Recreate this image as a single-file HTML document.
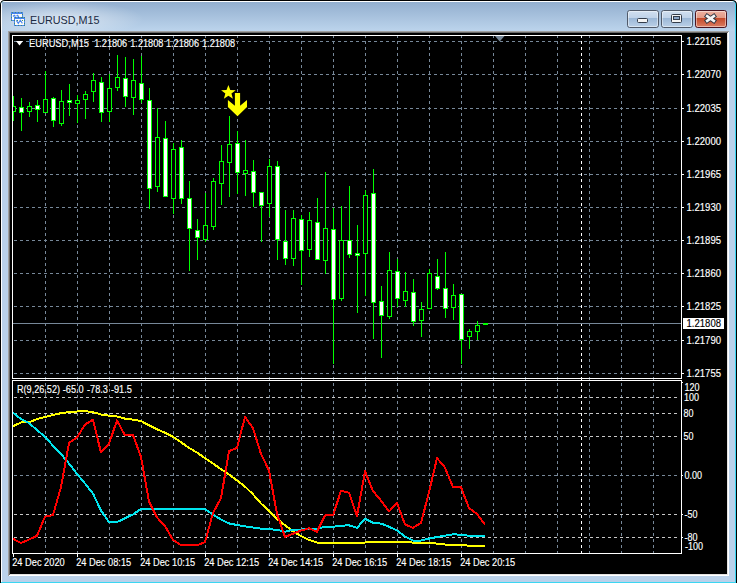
<!DOCTYPE html><html><head><meta charset="utf-8"><style>html,body{margin:0;padding:0;background:#fff;overflow:hidden;width:739px;height:583px}svg{display:block}</style></head><body>
<svg width="739" height="583" viewBox="0 0 739 583">
<defs><linearGradient id="tb" x1="0" y1="0" x2="0" y2="1"><stop offset="0" stop-color="#93afcf"/><stop offset="1" stop-color="#bcd4ec"/></linearGradient><linearGradient id="btn" x1="0" y1="0" x2="0" y2="1"><stop offset="0" stop-color="#d2e0f0"/><stop offset="0.42" stop-color="#c0d3e9"/><stop offset="0.47" stop-color="#9cb8d7"/><stop offset="1" stop-color="#bcd1e8"/></linearGradient><linearGradient id="cbtn" x1="0" y1="0" x2="0" y2="1"><stop offset="0" stop-color="#eeb2a2"/><stop offset="0.42" stop-color="#e39a86"/><stop offset="0.47" stop-color="#c44a2a"/><stop offset="1" stop-color="#dc8066"/></linearGradient><radialGradient id="glow" cx="0.5" cy="0.5" r="0.5"><stop offset="0" stop-color="#fff" stop-opacity="0.55"/><stop offset="1" stop-color="#fff" stop-opacity="0"/></radialGradient><clipPath id="mainclip"><rect x="13" y="36" width="668" height="342"/></clipPath><clipPath id="indclip"><rect x="13" y="381" width="668" height="172"/></clipPath></defs>
<path d="M0 583 V5 Q0 0 5 0 H732 Q737 0 737 5 V583 Z" fill="#000"/>
<path d="M1 583 V5 Q1 1 5 1 H732 Q736 1 736 5 V583 Z" fill="#3ad6f2"/>
<path d="M1 582 V5 Q1 1 5 1 H731 Q735 1 735 5 V582 Z" fill="#fff"/>
<rect x="2" y="2" width="733" height="580" fill="#bad1ea"/>
<rect x="2" y="2" width="733" height="29" fill="url(#tb)"/>
<ellipse cx="62" cy="19" rx="82" ry="18" fill="url(#glow)"/>
<rect x="8" y="31" width="721" height="545" fill="#fff"/>
<path d="M8 31 H729 V32 H9 V576 H8 Z" fill="#a0a0a0"/>
<rect x="9" y="32" width="719" height="543" fill="#e3e3e3"/>
<path d="M9 32 H728 V33 H10 V575 H9 Z" fill="#696969"/>
<rect x="10" y="33" width="717" height="541" fill="#000"/>
<g shape-rendering="crispEdges"><rect x="11" y="12" width="12" height="9" fill="#4a86f0"/><rect x="12" y="14" width="10" height="6" fill="#fdfdf6"/><rect x="14" y="17" width="11" height="9" fill="#4a86f0"/><rect x="15" y="19" width="9" height="6" fill="#fdfdf6"/></g>
<rect x="11.5" y="12.5" width="11" height="8" fill="none" stroke="#3f8a78" stroke-width="1" stroke-dasharray="1 2" shape-rendering="crispEdges"/>
<rect x="14.5" y="17.5" width="10" height="8" fill="none" stroke="#3f8a78" stroke-width="1" stroke-dasharray="1 2" shape-rendering="crispEdges"/>
<path d="M13 16.5 L14.3 15.3 L15.5 16.5 M16.5 16 L17.6 15.2 L18.8 16.8" stroke="#4a86f0" stroke-width="1.1" fill="none"/>
<path d="M16.2 20.3 L18.3 23.4 L20.3 20.3 L22.4 23.4" stroke="#4a86f0" stroke-width="1.1" fill="none"/>
<text x="30" y="24" font-family="Liberation Sans, sans-serif" font-size="11.5" fill="#1b2a44" textLength="69.5" lengthAdjust="spacingAndGlyphs">EURUSD,M15</text>
<rect x="627.5" y="10.5" width="31" height="17" rx="2.2" fill="url(#btn)" stroke="#505a6a" stroke-width="1"/>
<rect x="628.5" y="11.5" width="29" height="15" rx="1.5" fill="none" stroke="#fff" stroke-opacity="0.45" stroke-width="1"/>
<rect x="661.5" y="10.5" width="31" height="17" rx="2.2" fill="url(#btn)" stroke="#505a6a" stroke-width="1"/>
<rect x="662.5" y="11.5" width="29" height="15" rx="1.5" fill="none" stroke="#fff" stroke-opacity="0.45" stroke-width="1"/>
<rect x="695.5" y="10.5" width="31" height="17" rx="2.2" fill="url(#cbtn)" stroke="#4a1420" stroke-width="1"/>
<rect x="696.5" y="11.5" width="29" height="15" rx="1.5" fill="none" stroke="#fff" stroke-opacity="0.45" stroke-width="1"/>
<rect x="637.5" y="18.5" width="10" height="4" rx="1" fill="#f4f4f4" stroke="#333c4a" stroke-width="1"/>
<rect x="671.5" y="14.5" width="10" height="8" rx="1" fill="#f4f4f4" stroke="#333c4a" stroke-width="1"/>
<rect x="673.5" y="16.5" width="6" height="3" fill="#8aa6c8" stroke="#333c4a" stroke-width="1"/>
<path d="M707.2 16.2 L713.8 20.8 M713.8 16.2 L707.2 20.8" stroke="#2e3440" stroke-width="4.6" stroke-linecap="square"/>
<path d="M707.2 16.2 L713.8 20.8 M713.8 16.2 L707.2 20.8" stroke="#f4f4f4" stroke-width="2.7" stroke-linecap="square"/>
<g shape-rendering="crispEdges">
<path d="M45 36h1v2h-1zM45 41h1v3h-1zM45 47h1v3h-1zM45 53h1v3h-1zM45 59h1v3h-1zM45 65h1v3h-1zM45 71h1v3h-1zM45 77h1v3h-1zM45 83h1v3h-1zM45 89h1v3h-1zM45 95h1v3h-1zM45 101h1v3h-1zM45 107h1v3h-1zM45 113h1v3h-1zM45 119h1v3h-1zM45 125h1v3h-1zM45 131h1v3h-1zM45 137h1v3h-1zM45 143h1v3h-1zM45 149h1v3h-1zM45 155h1v3h-1zM45 161h1v3h-1zM45 167h1v3h-1zM45 173h1v3h-1zM45 179h1v3h-1zM45 185h1v3h-1zM45 191h1v3h-1zM45 197h1v3h-1zM45 203h1v3h-1zM45 209h1v3h-1zM45 215h1v3h-1zM45 221h1v3h-1zM45 227h1v3h-1zM45 233h1v3h-1zM45 239h1v3h-1zM45 245h1v3h-1zM45 251h1v3h-1zM45 257h1v3h-1zM45 263h1v3h-1zM45 269h1v3h-1zM45 275h1v3h-1zM45 281h1v3h-1zM45 287h1v3h-1zM45 293h1v3h-1zM45 299h1v3h-1zM45 305h1v3h-1zM45 311h1v3h-1zM45 317h1v3h-1zM45 323h1v3h-1zM45 329h1v3h-1zM45 335h1v3h-1zM45 341h1v3h-1zM45 347h1v3h-1zM45 353h1v3h-1zM45 359h1v3h-1zM45 365h1v3h-1zM45 371h1v3h-1zM45 377h1v1h-1zM45 379h1v1h-1zM45 383h1v3h-1zM45 389h1v3h-1zM45 395h1v3h-1zM45 401h1v3h-1zM45 407h1v3h-1zM45 413h1v3h-1zM45 419h1v3h-1zM45 425h1v3h-1zM45 431h1v3h-1zM45 437h1v3h-1zM45 443h1v3h-1zM45 449h1v3h-1zM45 455h1v3h-1zM45 461h1v3h-1zM45 467h1v3h-1zM45 473h1v3h-1zM45 479h1v3h-1zM45 485h1v3h-1zM45 491h1v3h-1zM45 497h1v3h-1zM45 503h1v3h-1zM45 509h1v3h-1zM45 515h1v3h-1zM45 521h1v3h-1zM45 527h1v3h-1zM45 533h1v3h-1zM45 539h1v3h-1zM45 545h1v3h-1zM45 551h1v2h-1zM77 36h1v2h-1zM77 41h1v3h-1zM77 47h1v3h-1zM77 53h1v3h-1zM77 59h1v3h-1zM77 65h1v3h-1zM77 71h1v3h-1zM77 77h1v3h-1zM77 83h1v3h-1zM77 89h1v3h-1zM77 95h1v3h-1zM77 101h1v3h-1zM77 107h1v3h-1zM77 113h1v3h-1zM77 119h1v3h-1zM77 125h1v3h-1zM77 131h1v3h-1zM77 137h1v3h-1zM77 143h1v3h-1zM77 149h1v3h-1zM77 155h1v3h-1zM77 161h1v3h-1zM77 167h1v3h-1zM77 173h1v3h-1zM77 179h1v3h-1zM77 185h1v3h-1zM77 191h1v3h-1zM77 197h1v3h-1zM77 203h1v3h-1zM77 209h1v3h-1zM77 215h1v3h-1zM77 221h1v3h-1zM77 227h1v3h-1zM77 233h1v3h-1zM77 239h1v3h-1zM77 245h1v3h-1zM77 251h1v3h-1zM77 257h1v3h-1zM77 263h1v3h-1zM77 269h1v3h-1zM77 275h1v3h-1zM77 281h1v3h-1zM77 287h1v3h-1zM77 293h1v3h-1zM77 299h1v3h-1zM77 305h1v3h-1zM77 311h1v3h-1zM77 317h1v3h-1zM77 323h1v3h-1zM77 329h1v3h-1zM77 335h1v3h-1zM77 341h1v3h-1zM77 347h1v3h-1zM77 353h1v3h-1zM77 359h1v3h-1zM77 365h1v3h-1zM77 371h1v3h-1zM77 377h1v1h-1zM77 379h1v1h-1zM77 383h1v3h-1zM77 389h1v3h-1zM77 395h1v3h-1zM77 401h1v3h-1zM77 407h1v3h-1zM77 413h1v3h-1zM77 419h1v3h-1zM77 425h1v3h-1zM77 431h1v3h-1zM77 437h1v3h-1zM77 443h1v3h-1zM77 449h1v3h-1zM77 455h1v3h-1zM77 461h1v3h-1zM77 467h1v3h-1zM77 473h1v3h-1zM77 479h1v3h-1zM77 485h1v3h-1zM77 491h1v3h-1zM77 497h1v3h-1zM77 503h1v3h-1zM77 509h1v3h-1zM77 515h1v3h-1zM77 521h1v3h-1zM77 527h1v3h-1zM77 533h1v3h-1zM77 539h1v3h-1zM77 545h1v3h-1zM77 551h1v2h-1zM109 36h1v2h-1zM109 41h1v3h-1zM109 47h1v3h-1zM109 53h1v3h-1zM109 59h1v3h-1zM109 65h1v3h-1zM109 71h1v3h-1zM109 77h1v3h-1zM109 83h1v3h-1zM109 89h1v3h-1zM109 95h1v3h-1zM109 101h1v3h-1zM109 107h1v3h-1zM109 113h1v3h-1zM109 119h1v3h-1zM109 125h1v3h-1zM109 131h1v3h-1zM109 137h1v3h-1zM109 143h1v3h-1zM109 149h1v3h-1zM109 155h1v3h-1zM109 161h1v3h-1zM109 167h1v3h-1zM109 173h1v3h-1zM109 179h1v3h-1zM109 185h1v3h-1zM109 191h1v3h-1zM109 197h1v3h-1zM109 203h1v3h-1zM109 209h1v3h-1zM109 215h1v3h-1zM109 221h1v3h-1zM109 227h1v3h-1zM109 233h1v3h-1zM109 239h1v3h-1zM109 245h1v3h-1zM109 251h1v3h-1zM109 257h1v3h-1zM109 263h1v3h-1zM109 269h1v3h-1zM109 275h1v3h-1zM109 281h1v3h-1zM109 287h1v3h-1zM109 293h1v3h-1zM109 299h1v3h-1zM109 305h1v3h-1zM109 311h1v3h-1zM109 317h1v3h-1zM109 323h1v3h-1zM109 329h1v3h-1zM109 335h1v3h-1zM109 341h1v3h-1zM109 347h1v3h-1zM109 353h1v3h-1zM109 359h1v3h-1zM109 365h1v3h-1zM109 371h1v3h-1zM109 377h1v1h-1zM109 379h1v1h-1zM109 383h1v3h-1zM109 389h1v3h-1zM109 395h1v3h-1zM109 401h1v3h-1zM109 407h1v3h-1zM109 413h1v3h-1zM109 419h1v3h-1zM109 425h1v3h-1zM109 431h1v3h-1zM109 437h1v3h-1zM109 443h1v3h-1zM109 449h1v3h-1zM109 455h1v3h-1zM109 461h1v3h-1zM109 467h1v3h-1zM109 473h1v3h-1zM109 479h1v3h-1zM109 485h1v3h-1zM109 491h1v3h-1zM109 497h1v3h-1zM109 503h1v3h-1zM109 509h1v3h-1zM109 515h1v3h-1zM109 521h1v3h-1zM109 527h1v3h-1zM109 533h1v3h-1zM109 539h1v3h-1zM109 545h1v3h-1zM109 551h1v2h-1zM141 36h1v2h-1zM141 41h1v3h-1zM141 47h1v3h-1zM141 53h1v3h-1zM141 59h1v3h-1zM141 65h1v3h-1zM141 71h1v3h-1zM141 77h1v3h-1zM141 83h1v3h-1zM141 89h1v3h-1zM141 95h1v3h-1zM141 101h1v3h-1zM141 107h1v3h-1zM141 113h1v3h-1zM141 119h1v3h-1zM141 125h1v3h-1zM141 131h1v3h-1zM141 137h1v3h-1zM141 143h1v3h-1zM141 149h1v3h-1zM141 155h1v3h-1zM141 161h1v3h-1zM141 167h1v3h-1zM141 173h1v3h-1zM141 179h1v3h-1zM141 185h1v3h-1zM141 191h1v3h-1zM141 197h1v3h-1zM141 203h1v3h-1zM141 209h1v3h-1zM141 215h1v3h-1zM141 221h1v3h-1zM141 227h1v3h-1zM141 233h1v3h-1zM141 239h1v3h-1zM141 245h1v3h-1zM141 251h1v3h-1zM141 257h1v3h-1zM141 263h1v3h-1zM141 269h1v3h-1zM141 275h1v3h-1zM141 281h1v3h-1zM141 287h1v3h-1zM141 293h1v3h-1zM141 299h1v3h-1zM141 305h1v3h-1zM141 311h1v3h-1zM141 317h1v3h-1zM141 323h1v3h-1zM141 329h1v3h-1zM141 335h1v3h-1zM141 341h1v3h-1zM141 347h1v3h-1zM141 353h1v3h-1zM141 359h1v3h-1zM141 365h1v3h-1zM141 371h1v3h-1zM141 377h1v1h-1zM141 379h1v1h-1zM141 383h1v3h-1zM141 389h1v3h-1zM141 395h1v3h-1zM141 401h1v3h-1zM141 407h1v3h-1zM141 413h1v3h-1zM141 419h1v3h-1zM141 425h1v3h-1zM141 431h1v3h-1zM141 437h1v3h-1zM141 443h1v3h-1zM141 449h1v3h-1zM141 455h1v3h-1zM141 461h1v3h-1zM141 467h1v3h-1zM141 473h1v3h-1zM141 479h1v3h-1zM141 485h1v3h-1zM141 491h1v3h-1zM141 497h1v3h-1zM141 503h1v3h-1zM141 509h1v3h-1zM141 515h1v3h-1zM141 521h1v3h-1zM141 527h1v3h-1zM141 533h1v3h-1zM141 539h1v3h-1zM141 545h1v3h-1zM141 551h1v2h-1zM173 36h1v2h-1zM173 41h1v3h-1zM173 47h1v3h-1zM173 53h1v3h-1zM173 59h1v3h-1zM173 65h1v3h-1zM173 71h1v3h-1zM173 77h1v3h-1zM173 83h1v3h-1zM173 89h1v3h-1zM173 95h1v3h-1zM173 101h1v3h-1zM173 107h1v3h-1zM173 113h1v3h-1zM173 119h1v3h-1zM173 125h1v3h-1zM173 131h1v3h-1zM173 137h1v3h-1zM173 143h1v3h-1zM173 149h1v3h-1zM173 155h1v3h-1zM173 161h1v3h-1zM173 167h1v3h-1zM173 173h1v3h-1zM173 179h1v3h-1zM173 185h1v3h-1zM173 191h1v3h-1zM173 197h1v3h-1zM173 203h1v3h-1zM173 209h1v3h-1zM173 215h1v3h-1zM173 221h1v3h-1zM173 227h1v3h-1zM173 233h1v3h-1zM173 239h1v3h-1zM173 245h1v3h-1zM173 251h1v3h-1zM173 257h1v3h-1zM173 263h1v3h-1zM173 269h1v3h-1zM173 275h1v3h-1zM173 281h1v3h-1zM173 287h1v3h-1zM173 293h1v3h-1zM173 299h1v3h-1zM173 305h1v3h-1zM173 311h1v3h-1zM173 317h1v3h-1zM173 323h1v3h-1zM173 329h1v3h-1zM173 335h1v3h-1zM173 341h1v3h-1zM173 347h1v3h-1zM173 353h1v3h-1zM173 359h1v3h-1zM173 365h1v3h-1zM173 371h1v3h-1zM173 377h1v1h-1zM173 379h1v1h-1zM173 383h1v3h-1zM173 389h1v3h-1zM173 395h1v3h-1zM173 401h1v3h-1zM173 407h1v3h-1zM173 413h1v3h-1zM173 419h1v3h-1zM173 425h1v3h-1zM173 431h1v3h-1zM173 437h1v3h-1zM173 443h1v3h-1zM173 449h1v3h-1zM173 455h1v3h-1zM173 461h1v3h-1zM173 467h1v3h-1zM173 473h1v3h-1zM173 479h1v3h-1zM173 485h1v3h-1zM173 491h1v3h-1zM173 497h1v3h-1zM173 503h1v3h-1zM173 509h1v3h-1zM173 515h1v3h-1zM173 521h1v3h-1zM173 527h1v3h-1zM173 533h1v3h-1zM173 539h1v3h-1zM173 545h1v3h-1zM173 551h1v2h-1zM205 36h1v2h-1zM205 41h1v3h-1zM205 47h1v3h-1zM205 53h1v3h-1zM205 59h1v3h-1zM205 65h1v3h-1zM205 71h1v3h-1zM205 77h1v3h-1zM205 83h1v3h-1zM205 89h1v3h-1zM205 95h1v3h-1zM205 101h1v3h-1zM205 107h1v3h-1zM205 113h1v3h-1zM205 119h1v3h-1zM205 125h1v3h-1zM205 131h1v3h-1zM205 137h1v3h-1zM205 143h1v3h-1zM205 149h1v3h-1zM205 155h1v3h-1zM205 161h1v3h-1zM205 167h1v3h-1zM205 173h1v3h-1zM205 179h1v3h-1zM205 185h1v3h-1zM205 191h1v3h-1zM205 197h1v3h-1zM205 203h1v3h-1zM205 209h1v3h-1zM205 215h1v3h-1zM205 221h1v3h-1zM205 227h1v3h-1zM205 233h1v3h-1zM205 239h1v3h-1zM205 245h1v3h-1zM205 251h1v3h-1zM205 257h1v3h-1zM205 263h1v3h-1zM205 269h1v3h-1zM205 275h1v3h-1zM205 281h1v3h-1zM205 287h1v3h-1zM205 293h1v3h-1zM205 299h1v3h-1zM205 305h1v3h-1zM205 311h1v3h-1zM205 317h1v3h-1zM205 323h1v3h-1zM205 329h1v3h-1zM205 335h1v3h-1zM205 341h1v3h-1zM205 347h1v3h-1zM205 353h1v3h-1zM205 359h1v3h-1zM205 365h1v3h-1zM205 371h1v3h-1zM205 377h1v1h-1zM205 379h1v1h-1zM205 383h1v3h-1zM205 389h1v3h-1zM205 395h1v3h-1zM205 401h1v3h-1zM205 407h1v3h-1zM205 413h1v3h-1zM205 419h1v3h-1zM205 425h1v3h-1zM205 431h1v3h-1zM205 437h1v3h-1zM205 443h1v3h-1zM205 449h1v3h-1zM205 455h1v3h-1zM205 461h1v3h-1zM205 467h1v3h-1zM205 473h1v3h-1zM205 479h1v3h-1zM205 485h1v3h-1zM205 491h1v3h-1zM205 497h1v3h-1zM205 503h1v3h-1zM205 509h1v3h-1zM205 515h1v3h-1zM205 521h1v3h-1zM205 527h1v3h-1zM205 533h1v3h-1zM205 539h1v3h-1zM205 545h1v3h-1zM205 551h1v2h-1zM237 36h1v2h-1zM237 41h1v3h-1zM237 47h1v3h-1zM237 53h1v3h-1zM237 59h1v3h-1zM237 65h1v3h-1zM237 71h1v3h-1zM237 77h1v3h-1zM237 83h1v3h-1zM237 89h1v3h-1zM237 95h1v3h-1zM237 101h1v3h-1zM237 107h1v3h-1zM237 113h1v3h-1zM237 119h1v3h-1zM237 125h1v3h-1zM237 131h1v3h-1zM237 137h1v3h-1zM237 143h1v3h-1zM237 149h1v3h-1zM237 155h1v3h-1zM237 161h1v3h-1zM237 167h1v3h-1zM237 173h1v3h-1zM237 179h1v3h-1zM237 185h1v3h-1zM237 191h1v3h-1zM237 197h1v3h-1zM237 203h1v3h-1zM237 209h1v3h-1zM237 215h1v3h-1zM237 221h1v3h-1zM237 227h1v3h-1zM237 233h1v3h-1zM237 239h1v3h-1zM237 245h1v3h-1zM237 251h1v3h-1zM237 257h1v3h-1zM237 263h1v3h-1zM237 269h1v3h-1zM237 275h1v3h-1zM237 281h1v3h-1zM237 287h1v3h-1zM237 293h1v3h-1zM237 299h1v3h-1zM237 305h1v3h-1zM237 311h1v3h-1zM237 317h1v3h-1zM237 323h1v3h-1zM237 329h1v3h-1zM237 335h1v3h-1zM237 341h1v3h-1zM237 347h1v3h-1zM237 353h1v3h-1zM237 359h1v3h-1zM237 365h1v3h-1zM237 371h1v3h-1zM237 377h1v1h-1zM237 379h1v1h-1zM237 383h1v3h-1zM237 389h1v3h-1zM237 395h1v3h-1zM237 401h1v3h-1zM237 407h1v3h-1zM237 413h1v3h-1zM237 419h1v3h-1zM237 425h1v3h-1zM237 431h1v3h-1zM237 437h1v3h-1zM237 443h1v3h-1zM237 449h1v3h-1zM237 455h1v3h-1zM237 461h1v3h-1zM237 467h1v3h-1zM237 473h1v3h-1zM237 479h1v3h-1zM237 485h1v3h-1zM237 491h1v3h-1zM237 497h1v3h-1zM237 503h1v3h-1zM237 509h1v3h-1zM237 515h1v3h-1zM237 521h1v3h-1zM237 527h1v3h-1zM237 533h1v3h-1zM237 539h1v3h-1zM237 545h1v3h-1zM237 551h1v2h-1zM269 36h1v2h-1zM269 41h1v3h-1zM269 47h1v3h-1zM269 53h1v3h-1zM269 59h1v3h-1zM269 65h1v3h-1zM269 71h1v3h-1zM269 77h1v3h-1zM269 83h1v3h-1zM269 89h1v3h-1zM269 95h1v3h-1zM269 101h1v3h-1zM269 107h1v3h-1zM269 113h1v3h-1zM269 119h1v3h-1zM269 125h1v3h-1zM269 131h1v3h-1zM269 137h1v3h-1zM269 143h1v3h-1zM269 149h1v3h-1zM269 155h1v3h-1zM269 161h1v3h-1zM269 167h1v3h-1zM269 173h1v3h-1zM269 179h1v3h-1zM269 185h1v3h-1zM269 191h1v3h-1zM269 197h1v3h-1zM269 203h1v3h-1zM269 209h1v3h-1zM269 215h1v3h-1zM269 221h1v3h-1zM269 227h1v3h-1zM269 233h1v3h-1zM269 239h1v3h-1zM269 245h1v3h-1zM269 251h1v3h-1zM269 257h1v3h-1zM269 263h1v3h-1zM269 269h1v3h-1zM269 275h1v3h-1zM269 281h1v3h-1zM269 287h1v3h-1zM269 293h1v3h-1zM269 299h1v3h-1zM269 305h1v3h-1zM269 311h1v3h-1zM269 317h1v3h-1zM269 323h1v3h-1zM269 329h1v3h-1zM269 335h1v3h-1zM269 341h1v3h-1zM269 347h1v3h-1zM269 353h1v3h-1zM269 359h1v3h-1zM269 365h1v3h-1zM269 371h1v3h-1zM269 377h1v1h-1zM269 379h1v1h-1zM269 383h1v3h-1zM269 389h1v3h-1zM269 395h1v3h-1zM269 401h1v3h-1zM269 407h1v3h-1zM269 413h1v3h-1zM269 419h1v3h-1zM269 425h1v3h-1zM269 431h1v3h-1zM269 437h1v3h-1zM269 443h1v3h-1zM269 449h1v3h-1zM269 455h1v3h-1zM269 461h1v3h-1zM269 467h1v3h-1zM269 473h1v3h-1zM269 479h1v3h-1zM269 485h1v3h-1zM269 491h1v3h-1zM269 497h1v3h-1zM269 503h1v3h-1zM269 509h1v3h-1zM269 515h1v3h-1zM269 521h1v3h-1zM269 527h1v3h-1zM269 533h1v3h-1zM269 539h1v3h-1zM269 545h1v3h-1zM269 551h1v2h-1zM301 36h1v2h-1zM301 41h1v3h-1zM301 47h1v3h-1zM301 53h1v3h-1zM301 59h1v3h-1zM301 65h1v3h-1zM301 71h1v3h-1zM301 77h1v3h-1zM301 83h1v3h-1zM301 89h1v3h-1zM301 95h1v3h-1zM301 101h1v3h-1zM301 107h1v3h-1zM301 113h1v3h-1zM301 119h1v3h-1zM301 125h1v3h-1zM301 131h1v3h-1zM301 137h1v3h-1zM301 143h1v3h-1zM301 149h1v3h-1zM301 155h1v3h-1zM301 161h1v3h-1zM301 167h1v3h-1zM301 173h1v3h-1zM301 179h1v3h-1zM301 185h1v3h-1zM301 191h1v3h-1zM301 197h1v3h-1zM301 203h1v3h-1zM301 209h1v3h-1zM301 215h1v3h-1zM301 221h1v3h-1zM301 227h1v3h-1zM301 233h1v3h-1zM301 239h1v3h-1zM301 245h1v3h-1zM301 251h1v3h-1zM301 257h1v3h-1zM301 263h1v3h-1zM301 269h1v3h-1zM301 275h1v3h-1zM301 281h1v3h-1zM301 287h1v3h-1zM301 293h1v3h-1zM301 299h1v3h-1zM301 305h1v3h-1zM301 311h1v3h-1zM301 317h1v3h-1zM301 323h1v3h-1zM301 329h1v3h-1zM301 335h1v3h-1zM301 341h1v3h-1zM301 347h1v3h-1zM301 353h1v3h-1zM301 359h1v3h-1zM301 365h1v3h-1zM301 371h1v3h-1zM301 377h1v1h-1zM301 379h1v1h-1zM301 383h1v3h-1zM301 389h1v3h-1zM301 395h1v3h-1zM301 401h1v3h-1zM301 407h1v3h-1zM301 413h1v3h-1zM301 419h1v3h-1zM301 425h1v3h-1zM301 431h1v3h-1zM301 437h1v3h-1zM301 443h1v3h-1zM301 449h1v3h-1zM301 455h1v3h-1zM301 461h1v3h-1zM301 467h1v3h-1zM301 473h1v3h-1zM301 479h1v3h-1zM301 485h1v3h-1zM301 491h1v3h-1zM301 497h1v3h-1zM301 503h1v3h-1zM301 509h1v3h-1zM301 515h1v3h-1zM301 521h1v3h-1zM301 527h1v3h-1zM301 533h1v3h-1zM301 539h1v3h-1zM301 545h1v3h-1zM301 551h1v2h-1zM333 36h1v2h-1zM333 41h1v3h-1zM333 47h1v3h-1zM333 53h1v3h-1zM333 59h1v3h-1zM333 65h1v3h-1zM333 71h1v3h-1zM333 77h1v3h-1zM333 83h1v3h-1zM333 89h1v3h-1zM333 95h1v3h-1zM333 101h1v3h-1zM333 107h1v3h-1zM333 113h1v3h-1zM333 119h1v3h-1zM333 125h1v3h-1zM333 131h1v3h-1zM333 137h1v3h-1zM333 143h1v3h-1zM333 149h1v3h-1zM333 155h1v3h-1zM333 161h1v3h-1zM333 167h1v3h-1zM333 173h1v3h-1zM333 179h1v3h-1zM333 185h1v3h-1zM333 191h1v3h-1zM333 197h1v3h-1zM333 203h1v3h-1zM333 209h1v3h-1zM333 215h1v3h-1zM333 221h1v3h-1zM333 227h1v3h-1zM333 233h1v3h-1zM333 239h1v3h-1zM333 245h1v3h-1zM333 251h1v3h-1zM333 257h1v3h-1zM333 263h1v3h-1zM333 269h1v3h-1zM333 275h1v3h-1zM333 281h1v3h-1zM333 287h1v3h-1zM333 293h1v3h-1zM333 299h1v3h-1zM333 305h1v3h-1zM333 311h1v3h-1zM333 317h1v3h-1zM333 323h1v3h-1zM333 329h1v3h-1zM333 335h1v3h-1zM333 341h1v3h-1zM333 347h1v3h-1zM333 353h1v3h-1zM333 359h1v3h-1zM333 365h1v3h-1zM333 371h1v3h-1zM333 377h1v1h-1zM333 379h1v1h-1zM333 383h1v3h-1zM333 389h1v3h-1zM333 395h1v3h-1zM333 401h1v3h-1zM333 407h1v3h-1zM333 413h1v3h-1zM333 419h1v3h-1zM333 425h1v3h-1zM333 431h1v3h-1zM333 437h1v3h-1zM333 443h1v3h-1zM333 449h1v3h-1zM333 455h1v3h-1zM333 461h1v3h-1zM333 467h1v3h-1zM333 473h1v3h-1zM333 479h1v3h-1zM333 485h1v3h-1zM333 491h1v3h-1zM333 497h1v3h-1zM333 503h1v3h-1zM333 509h1v3h-1zM333 515h1v3h-1zM333 521h1v3h-1zM333 527h1v3h-1zM333 533h1v3h-1zM333 539h1v3h-1zM333 545h1v3h-1zM333 551h1v2h-1zM365 36h1v2h-1zM365 41h1v3h-1zM365 47h1v3h-1zM365 53h1v3h-1zM365 59h1v3h-1zM365 65h1v3h-1zM365 71h1v3h-1zM365 77h1v3h-1zM365 83h1v3h-1zM365 89h1v3h-1zM365 95h1v3h-1zM365 101h1v3h-1zM365 107h1v3h-1zM365 113h1v3h-1zM365 119h1v3h-1zM365 125h1v3h-1zM365 131h1v3h-1zM365 137h1v3h-1zM365 143h1v3h-1zM365 149h1v3h-1zM365 155h1v3h-1zM365 161h1v3h-1zM365 167h1v3h-1zM365 173h1v3h-1zM365 179h1v3h-1zM365 185h1v3h-1zM365 191h1v3h-1zM365 197h1v3h-1zM365 203h1v3h-1zM365 209h1v3h-1zM365 215h1v3h-1zM365 221h1v3h-1zM365 227h1v3h-1zM365 233h1v3h-1zM365 239h1v3h-1zM365 245h1v3h-1zM365 251h1v3h-1zM365 257h1v3h-1zM365 263h1v3h-1zM365 269h1v3h-1zM365 275h1v3h-1zM365 281h1v3h-1zM365 287h1v3h-1zM365 293h1v3h-1zM365 299h1v3h-1zM365 305h1v3h-1zM365 311h1v3h-1zM365 317h1v3h-1zM365 323h1v3h-1zM365 329h1v3h-1zM365 335h1v3h-1zM365 341h1v3h-1zM365 347h1v3h-1zM365 353h1v3h-1zM365 359h1v3h-1zM365 365h1v3h-1zM365 371h1v3h-1zM365 377h1v1h-1zM365 379h1v1h-1zM365 383h1v3h-1zM365 389h1v3h-1zM365 395h1v3h-1zM365 401h1v3h-1zM365 407h1v3h-1zM365 413h1v3h-1zM365 419h1v3h-1zM365 425h1v3h-1zM365 431h1v3h-1zM365 437h1v3h-1zM365 443h1v3h-1zM365 449h1v3h-1zM365 455h1v3h-1zM365 461h1v3h-1zM365 467h1v3h-1zM365 473h1v3h-1zM365 479h1v3h-1zM365 485h1v3h-1zM365 491h1v3h-1zM365 497h1v3h-1zM365 503h1v3h-1zM365 509h1v3h-1zM365 515h1v3h-1zM365 521h1v3h-1zM365 527h1v3h-1zM365 533h1v3h-1zM365 539h1v3h-1zM365 545h1v3h-1zM365 551h1v2h-1zM397 36h1v2h-1zM397 41h1v3h-1zM397 47h1v3h-1zM397 53h1v3h-1zM397 59h1v3h-1zM397 65h1v3h-1zM397 71h1v3h-1zM397 77h1v3h-1zM397 83h1v3h-1zM397 89h1v3h-1zM397 95h1v3h-1zM397 101h1v3h-1zM397 107h1v3h-1zM397 113h1v3h-1zM397 119h1v3h-1zM397 125h1v3h-1zM397 131h1v3h-1zM397 137h1v3h-1zM397 143h1v3h-1zM397 149h1v3h-1zM397 155h1v3h-1zM397 161h1v3h-1zM397 167h1v3h-1zM397 173h1v3h-1zM397 179h1v3h-1zM397 185h1v3h-1zM397 191h1v3h-1zM397 197h1v3h-1zM397 203h1v3h-1zM397 209h1v3h-1zM397 215h1v3h-1zM397 221h1v3h-1zM397 227h1v3h-1zM397 233h1v3h-1zM397 239h1v3h-1zM397 245h1v3h-1zM397 251h1v3h-1zM397 257h1v3h-1zM397 263h1v3h-1zM397 269h1v3h-1zM397 275h1v3h-1zM397 281h1v3h-1zM397 287h1v3h-1zM397 293h1v3h-1zM397 299h1v3h-1zM397 305h1v3h-1zM397 311h1v3h-1zM397 317h1v3h-1zM397 323h1v3h-1zM397 329h1v3h-1zM397 335h1v3h-1zM397 341h1v3h-1zM397 347h1v3h-1zM397 353h1v3h-1zM397 359h1v3h-1zM397 365h1v3h-1zM397 371h1v3h-1zM397 377h1v1h-1zM397 379h1v1h-1zM397 383h1v3h-1zM397 389h1v3h-1zM397 395h1v3h-1zM397 401h1v3h-1zM397 407h1v3h-1zM397 413h1v3h-1zM397 419h1v3h-1zM397 425h1v3h-1zM397 431h1v3h-1zM397 437h1v3h-1zM397 443h1v3h-1zM397 449h1v3h-1zM397 455h1v3h-1zM397 461h1v3h-1zM397 467h1v3h-1zM397 473h1v3h-1zM397 479h1v3h-1zM397 485h1v3h-1zM397 491h1v3h-1zM397 497h1v3h-1zM397 503h1v3h-1zM397 509h1v3h-1zM397 515h1v3h-1zM397 521h1v3h-1zM397 527h1v3h-1zM397 533h1v3h-1zM397 539h1v3h-1zM397 545h1v3h-1zM397 551h1v2h-1zM429 36h1v2h-1zM429 41h1v3h-1zM429 47h1v3h-1zM429 53h1v3h-1zM429 59h1v3h-1zM429 65h1v3h-1zM429 71h1v3h-1zM429 77h1v3h-1zM429 83h1v3h-1zM429 89h1v3h-1zM429 95h1v3h-1zM429 101h1v3h-1zM429 107h1v3h-1zM429 113h1v3h-1zM429 119h1v3h-1zM429 125h1v3h-1zM429 131h1v3h-1zM429 137h1v3h-1zM429 143h1v3h-1zM429 149h1v3h-1zM429 155h1v3h-1zM429 161h1v3h-1zM429 167h1v3h-1zM429 173h1v3h-1zM429 179h1v3h-1zM429 185h1v3h-1zM429 191h1v3h-1zM429 197h1v3h-1zM429 203h1v3h-1zM429 209h1v3h-1zM429 215h1v3h-1zM429 221h1v3h-1zM429 227h1v3h-1zM429 233h1v3h-1zM429 239h1v3h-1zM429 245h1v3h-1zM429 251h1v3h-1zM429 257h1v3h-1zM429 263h1v3h-1zM429 269h1v3h-1zM429 275h1v3h-1zM429 281h1v3h-1zM429 287h1v3h-1zM429 293h1v3h-1zM429 299h1v3h-1zM429 305h1v3h-1zM429 311h1v3h-1zM429 317h1v3h-1zM429 323h1v3h-1zM429 329h1v3h-1zM429 335h1v3h-1zM429 341h1v3h-1zM429 347h1v3h-1zM429 353h1v3h-1zM429 359h1v3h-1zM429 365h1v3h-1zM429 371h1v3h-1zM429 377h1v1h-1zM429 379h1v1h-1zM429 383h1v3h-1zM429 389h1v3h-1zM429 395h1v3h-1zM429 401h1v3h-1zM429 407h1v3h-1zM429 413h1v3h-1zM429 419h1v3h-1zM429 425h1v3h-1zM429 431h1v3h-1zM429 437h1v3h-1zM429 443h1v3h-1zM429 449h1v3h-1zM429 455h1v3h-1zM429 461h1v3h-1zM429 467h1v3h-1zM429 473h1v3h-1zM429 479h1v3h-1zM429 485h1v3h-1zM429 491h1v3h-1zM429 497h1v3h-1zM429 503h1v3h-1zM429 509h1v3h-1zM429 515h1v3h-1zM429 521h1v3h-1zM429 527h1v3h-1zM429 533h1v3h-1zM429 539h1v3h-1zM429 545h1v3h-1zM429 551h1v2h-1zM461 36h1v2h-1zM461 41h1v3h-1zM461 47h1v3h-1zM461 53h1v3h-1zM461 59h1v3h-1zM461 65h1v3h-1zM461 71h1v3h-1zM461 77h1v3h-1zM461 83h1v3h-1zM461 89h1v3h-1zM461 95h1v3h-1zM461 101h1v3h-1zM461 107h1v3h-1zM461 113h1v3h-1zM461 119h1v3h-1zM461 125h1v3h-1zM461 131h1v3h-1zM461 137h1v3h-1zM461 143h1v3h-1zM461 149h1v3h-1zM461 155h1v3h-1zM461 161h1v3h-1zM461 167h1v3h-1zM461 173h1v3h-1zM461 179h1v3h-1zM461 185h1v3h-1zM461 191h1v3h-1zM461 197h1v3h-1zM461 203h1v3h-1zM461 209h1v3h-1zM461 215h1v3h-1zM461 221h1v3h-1zM461 227h1v3h-1zM461 233h1v3h-1zM461 239h1v3h-1zM461 245h1v3h-1zM461 251h1v3h-1zM461 257h1v3h-1zM461 263h1v3h-1zM461 269h1v3h-1zM461 275h1v3h-1zM461 281h1v3h-1zM461 287h1v3h-1zM461 293h1v3h-1zM461 299h1v3h-1zM461 305h1v3h-1zM461 311h1v3h-1zM461 317h1v3h-1zM461 323h1v3h-1zM461 329h1v3h-1zM461 335h1v3h-1zM461 341h1v3h-1zM461 347h1v3h-1zM461 353h1v3h-1zM461 359h1v3h-1zM461 365h1v3h-1zM461 371h1v3h-1zM461 377h1v1h-1zM461 379h1v1h-1zM461 383h1v3h-1zM461 389h1v3h-1zM461 395h1v3h-1zM461 401h1v3h-1zM461 407h1v3h-1zM461 413h1v3h-1zM461 419h1v3h-1zM461 425h1v3h-1zM461 431h1v3h-1zM461 437h1v3h-1zM461 443h1v3h-1zM461 449h1v3h-1zM461 455h1v3h-1zM461 461h1v3h-1zM461 467h1v3h-1zM461 473h1v3h-1zM461 479h1v3h-1zM461 485h1v3h-1zM461 491h1v3h-1zM461 497h1v3h-1zM461 503h1v3h-1zM461 509h1v3h-1zM461 515h1v3h-1zM461 521h1v3h-1zM461 527h1v3h-1zM461 533h1v3h-1zM461 539h1v3h-1zM461 545h1v3h-1zM461 551h1v2h-1zM493 36h1v2h-1zM493 41h1v3h-1zM493 47h1v3h-1zM493 53h1v3h-1zM493 59h1v3h-1zM493 65h1v3h-1zM493 71h1v3h-1zM493 77h1v3h-1zM493 83h1v3h-1zM493 89h1v3h-1zM493 95h1v3h-1zM493 101h1v3h-1zM493 107h1v3h-1zM493 113h1v3h-1zM493 119h1v3h-1zM493 125h1v3h-1zM493 131h1v3h-1zM493 137h1v3h-1zM493 143h1v3h-1zM493 149h1v3h-1zM493 155h1v3h-1zM493 161h1v3h-1zM493 167h1v3h-1zM493 173h1v3h-1zM493 179h1v3h-1zM493 185h1v3h-1zM493 191h1v3h-1zM493 197h1v3h-1zM493 203h1v3h-1zM493 209h1v3h-1zM493 215h1v3h-1zM493 221h1v3h-1zM493 227h1v3h-1zM493 233h1v3h-1zM493 239h1v3h-1zM493 245h1v3h-1zM493 251h1v3h-1zM493 257h1v3h-1zM493 263h1v3h-1zM493 269h1v3h-1zM493 275h1v3h-1zM493 281h1v3h-1zM493 287h1v3h-1zM493 293h1v3h-1zM493 299h1v3h-1zM493 305h1v3h-1zM493 311h1v3h-1zM493 317h1v3h-1zM493 323h1v3h-1zM493 329h1v3h-1zM493 335h1v3h-1zM493 341h1v3h-1zM493 347h1v3h-1zM493 353h1v3h-1zM493 359h1v3h-1zM493 365h1v3h-1zM493 371h1v3h-1zM493 377h1v1h-1zM493 379h1v1h-1zM493 383h1v3h-1zM493 389h1v3h-1zM493 395h1v3h-1zM493 401h1v3h-1zM493 407h1v3h-1zM493 413h1v3h-1zM493 419h1v3h-1zM493 425h1v3h-1zM493 431h1v3h-1zM493 437h1v3h-1zM493 443h1v3h-1zM493 449h1v3h-1zM493 455h1v3h-1zM493 461h1v3h-1zM493 467h1v3h-1zM493 473h1v3h-1zM493 479h1v3h-1zM493 485h1v3h-1zM493 491h1v3h-1zM493 497h1v3h-1zM493 503h1v3h-1zM493 509h1v3h-1zM493 515h1v3h-1zM493 521h1v3h-1zM493 527h1v3h-1zM493 533h1v3h-1zM493 539h1v3h-1zM493 545h1v3h-1zM493 551h1v2h-1zM525 36h1v2h-1zM525 41h1v3h-1zM525 47h1v3h-1zM525 53h1v3h-1zM525 59h1v3h-1zM525 65h1v3h-1zM525 71h1v3h-1zM525 77h1v3h-1zM525 83h1v3h-1zM525 89h1v3h-1zM525 95h1v3h-1zM525 101h1v3h-1zM525 107h1v3h-1zM525 113h1v3h-1zM525 119h1v3h-1zM525 125h1v3h-1zM525 131h1v3h-1zM525 137h1v3h-1zM525 143h1v3h-1zM525 149h1v3h-1zM525 155h1v3h-1zM525 161h1v3h-1zM525 167h1v3h-1zM525 173h1v3h-1zM525 179h1v3h-1zM525 185h1v3h-1zM525 191h1v3h-1zM525 197h1v3h-1zM525 203h1v3h-1zM525 209h1v3h-1zM525 215h1v3h-1zM525 221h1v3h-1zM525 227h1v3h-1zM525 233h1v3h-1zM525 239h1v3h-1zM525 245h1v3h-1zM525 251h1v3h-1zM525 257h1v3h-1zM525 263h1v3h-1zM525 269h1v3h-1zM525 275h1v3h-1zM525 281h1v3h-1zM525 287h1v3h-1zM525 293h1v3h-1zM525 299h1v3h-1zM525 305h1v3h-1zM525 311h1v3h-1zM525 317h1v3h-1zM525 323h1v3h-1zM525 329h1v3h-1zM525 335h1v3h-1zM525 341h1v3h-1zM525 347h1v3h-1zM525 353h1v3h-1zM525 359h1v3h-1zM525 365h1v3h-1zM525 371h1v3h-1zM525 377h1v1h-1zM525 379h1v1h-1zM525 383h1v3h-1zM525 389h1v3h-1zM525 395h1v3h-1zM525 401h1v3h-1zM525 407h1v3h-1zM525 413h1v3h-1zM525 419h1v3h-1zM525 425h1v3h-1zM525 431h1v3h-1zM525 437h1v3h-1zM525 443h1v3h-1zM525 449h1v3h-1zM525 455h1v3h-1zM525 461h1v3h-1zM525 467h1v3h-1zM525 473h1v3h-1zM525 479h1v3h-1zM525 485h1v3h-1zM525 491h1v3h-1zM525 497h1v3h-1zM525 503h1v3h-1zM525 509h1v3h-1zM525 515h1v3h-1zM525 521h1v3h-1zM525 527h1v3h-1zM525 533h1v3h-1zM525 539h1v3h-1zM525 545h1v3h-1zM525 551h1v2h-1zM557 36h1v2h-1zM557 41h1v3h-1zM557 47h1v3h-1zM557 53h1v3h-1zM557 59h1v3h-1zM557 65h1v3h-1zM557 71h1v3h-1zM557 77h1v3h-1zM557 83h1v3h-1zM557 89h1v3h-1zM557 95h1v3h-1zM557 101h1v3h-1zM557 107h1v3h-1zM557 113h1v3h-1zM557 119h1v3h-1zM557 125h1v3h-1zM557 131h1v3h-1zM557 137h1v3h-1zM557 143h1v3h-1zM557 149h1v3h-1zM557 155h1v3h-1zM557 161h1v3h-1zM557 167h1v3h-1zM557 173h1v3h-1zM557 179h1v3h-1zM557 185h1v3h-1zM557 191h1v3h-1zM557 197h1v3h-1zM557 203h1v3h-1zM557 209h1v3h-1zM557 215h1v3h-1zM557 221h1v3h-1zM557 227h1v3h-1zM557 233h1v3h-1zM557 239h1v3h-1zM557 245h1v3h-1zM557 251h1v3h-1zM557 257h1v3h-1zM557 263h1v3h-1zM557 269h1v3h-1zM557 275h1v3h-1zM557 281h1v3h-1zM557 287h1v3h-1zM557 293h1v3h-1zM557 299h1v3h-1zM557 305h1v3h-1zM557 311h1v3h-1zM557 317h1v3h-1zM557 323h1v3h-1zM557 329h1v3h-1zM557 335h1v3h-1zM557 341h1v3h-1zM557 347h1v3h-1zM557 353h1v3h-1zM557 359h1v3h-1zM557 365h1v3h-1zM557 371h1v3h-1zM557 377h1v1h-1zM557 379h1v1h-1zM557 383h1v3h-1zM557 389h1v3h-1zM557 395h1v3h-1zM557 401h1v3h-1zM557 407h1v3h-1zM557 413h1v3h-1zM557 419h1v3h-1zM557 425h1v3h-1zM557 431h1v3h-1zM557 437h1v3h-1zM557 443h1v3h-1zM557 449h1v3h-1zM557 455h1v3h-1zM557 461h1v3h-1zM557 467h1v3h-1zM557 473h1v3h-1zM557 479h1v3h-1zM557 485h1v3h-1zM557 491h1v3h-1zM557 497h1v3h-1zM557 503h1v3h-1zM557 509h1v3h-1zM557 515h1v3h-1zM557 521h1v3h-1zM557 527h1v3h-1zM557 533h1v3h-1zM557 539h1v3h-1zM557 545h1v3h-1zM557 551h1v2h-1zM589 36h1v2h-1zM589 41h1v3h-1zM589 47h1v3h-1zM589 53h1v3h-1zM589 59h1v3h-1zM589 65h1v3h-1zM589 71h1v3h-1zM589 77h1v3h-1zM589 83h1v3h-1zM589 89h1v3h-1zM589 95h1v3h-1zM589 101h1v3h-1zM589 107h1v3h-1zM589 113h1v3h-1zM589 119h1v3h-1zM589 125h1v3h-1zM589 131h1v3h-1zM589 137h1v3h-1zM589 143h1v3h-1zM589 149h1v3h-1zM589 155h1v3h-1zM589 161h1v3h-1zM589 167h1v3h-1zM589 173h1v3h-1zM589 179h1v3h-1zM589 185h1v3h-1zM589 191h1v3h-1zM589 197h1v3h-1zM589 203h1v3h-1zM589 209h1v3h-1zM589 215h1v3h-1zM589 221h1v3h-1zM589 227h1v3h-1zM589 233h1v3h-1zM589 239h1v3h-1zM589 245h1v3h-1zM589 251h1v3h-1zM589 257h1v3h-1zM589 263h1v3h-1zM589 269h1v3h-1zM589 275h1v3h-1zM589 281h1v3h-1zM589 287h1v3h-1zM589 293h1v3h-1zM589 299h1v3h-1zM589 305h1v3h-1zM589 311h1v3h-1zM589 317h1v3h-1zM589 323h1v3h-1zM589 329h1v3h-1zM589 335h1v3h-1zM589 341h1v3h-1zM589 347h1v3h-1zM589 353h1v3h-1zM589 359h1v3h-1zM589 365h1v3h-1zM589 371h1v3h-1zM589 377h1v1h-1zM589 379h1v1h-1zM589 383h1v3h-1zM589 389h1v3h-1zM589 395h1v3h-1zM589 401h1v3h-1zM589 407h1v3h-1zM589 413h1v3h-1zM589 419h1v3h-1zM589 425h1v3h-1zM589 431h1v3h-1zM589 437h1v3h-1zM589 443h1v3h-1zM589 449h1v3h-1zM589 455h1v3h-1zM589 461h1v3h-1zM589 467h1v3h-1zM589 473h1v3h-1zM589 479h1v3h-1zM589 485h1v3h-1zM589 491h1v3h-1zM589 497h1v3h-1zM589 503h1v3h-1zM589 509h1v3h-1zM589 515h1v3h-1zM589 521h1v3h-1zM589 527h1v3h-1zM589 533h1v3h-1zM589 539h1v3h-1zM589 545h1v3h-1zM589 551h1v2h-1zM621 36h1v2h-1zM621 41h1v3h-1zM621 47h1v3h-1zM621 53h1v3h-1zM621 59h1v3h-1zM621 65h1v3h-1zM621 71h1v3h-1zM621 77h1v3h-1zM621 83h1v3h-1zM621 89h1v3h-1zM621 95h1v3h-1zM621 101h1v3h-1zM621 107h1v3h-1zM621 113h1v3h-1zM621 119h1v3h-1zM621 125h1v3h-1zM621 131h1v3h-1zM621 137h1v3h-1zM621 143h1v3h-1zM621 149h1v3h-1zM621 155h1v3h-1zM621 161h1v3h-1zM621 167h1v3h-1zM621 173h1v3h-1zM621 179h1v3h-1zM621 185h1v3h-1zM621 191h1v3h-1zM621 197h1v3h-1zM621 203h1v3h-1zM621 209h1v3h-1zM621 215h1v3h-1zM621 221h1v3h-1zM621 227h1v3h-1zM621 233h1v3h-1zM621 239h1v3h-1zM621 245h1v3h-1zM621 251h1v3h-1zM621 257h1v3h-1zM621 263h1v3h-1zM621 269h1v3h-1zM621 275h1v3h-1zM621 281h1v3h-1zM621 287h1v3h-1zM621 293h1v3h-1zM621 299h1v3h-1zM621 305h1v3h-1zM621 311h1v3h-1zM621 317h1v3h-1zM621 323h1v3h-1zM621 329h1v3h-1zM621 335h1v3h-1zM621 341h1v3h-1zM621 347h1v3h-1zM621 353h1v3h-1zM621 359h1v3h-1zM621 365h1v3h-1zM621 371h1v3h-1zM621 377h1v1h-1zM621 379h1v1h-1zM621 383h1v3h-1zM621 389h1v3h-1zM621 395h1v3h-1zM621 401h1v3h-1zM621 407h1v3h-1zM621 413h1v3h-1zM621 419h1v3h-1zM621 425h1v3h-1zM621 431h1v3h-1zM621 437h1v3h-1zM621 443h1v3h-1zM621 449h1v3h-1zM621 455h1v3h-1zM621 461h1v3h-1zM621 467h1v3h-1zM621 473h1v3h-1zM621 479h1v3h-1zM621 485h1v3h-1zM621 491h1v3h-1zM621 497h1v3h-1zM621 503h1v3h-1zM621 509h1v3h-1zM621 515h1v3h-1zM621 521h1v3h-1zM621 527h1v3h-1zM621 533h1v3h-1zM621 539h1v3h-1zM621 545h1v3h-1zM621 551h1v2h-1zM653 36h1v2h-1zM653 41h1v3h-1zM653 47h1v3h-1zM653 53h1v3h-1zM653 59h1v3h-1zM653 65h1v3h-1zM653 71h1v3h-1zM653 77h1v3h-1zM653 83h1v3h-1zM653 89h1v3h-1zM653 95h1v3h-1zM653 101h1v3h-1zM653 107h1v3h-1zM653 113h1v3h-1zM653 119h1v3h-1zM653 125h1v3h-1zM653 131h1v3h-1zM653 137h1v3h-1zM653 143h1v3h-1zM653 149h1v3h-1zM653 155h1v3h-1zM653 161h1v3h-1zM653 167h1v3h-1zM653 173h1v3h-1zM653 179h1v3h-1zM653 185h1v3h-1zM653 191h1v3h-1zM653 197h1v3h-1zM653 203h1v3h-1zM653 209h1v3h-1zM653 215h1v3h-1zM653 221h1v3h-1zM653 227h1v3h-1zM653 233h1v3h-1zM653 239h1v3h-1zM653 245h1v3h-1zM653 251h1v3h-1zM653 257h1v3h-1zM653 263h1v3h-1zM653 269h1v3h-1zM653 275h1v3h-1zM653 281h1v3h-1zM653 287h1v3h-1zM653 293h1v3h-1zM653 299h1v3h-1zM653 305h1v3h-1zM653 311h1v3h-1zM653 317h1v3h-1zM653 323h1v3h-1zM653 329h1v3h-1zM653 335h1v3h-1zM653 341h1v3h-1zM653 347h1v3h-1zM653 353h1v3h-1zM653 359h1v3h-1zM653 365h1v3h-1zM653 371h1v3h-1zM653 377h1v1h-1zM653 379h1v1h-1zM653 383h1v3h-1zM653 389h1v3h-1zM653 395h1v3h-1zM653 401h1v3h-1zM653 407h1v3h-1zM653 413h1v3h-1zM653 419h1v3h-1zM653 425h1v3h-1zM653 431h1v3h-1zM653 437h1v3h-1zM653 443h1v3h-1zM653 449h1v3h-1zM653 455h1v3h-1zM653 461h1v3h-1zM653 467h1v3h-1zM653 473h1v3h-1zM653 479h1v3h-1zM653 485h1v3h-1zM653 491h1v3h-1zM653 497h1v3h-1zM653 503h1v3h-1zM653 509h1v3h-1zM653 515h1v3h-1zM653 521h1v3h-1zM653 527h1v3h-1zM653 533h1v3h-1zM653 539h1v3h-1zM653 545h1v3h-1zM653 551h1v2h-1zM14 41h3v1h-3zM20 41h3v1h-3zM26 41h3v1h-3zM32 41h3v1h-3zM38 41h3v1h-3zM44 41h3v1h-3zM50 41h3v1h-3zM56 41h3v1h-3zM62 41h3v1h-3zM68 41h3v1h-3zM74 41h3v1h-3zM80 41h3v1h-3zM86 41h3v1h-3zM92 41h3v1h-3zM98 41h3v1h-3zM104 41h3v1h-3zM110 41h3v1h-3zM116 41h3v1h-3zM122 41h3v1h-3zM128 41h3v1h-3zM134 41h3v1h-3zM140 41h3v1h-3zM146 41h3v1h-3zM152 41h3v1h-3zM158 41h3v1h-3zM164 41h3v1h-3zM170 41h3v1h-3zM176 41h3v1h-3zM182 41h3v1h-3zM188 41h3v1h-3zM194 41h3v1h-3zM200 41h3v1h-3zM206 41h3v1h-3zM212 41h3v1h-3zM218 41h3v1h-3zM224 41h3v1h-3zM230 41h3v1h-3zM236 41h3v1h-3zM242 41h3v1h-3zM248 41h3v1h-3zM254 41h3v1h-3zM260 41h3v1h-3zM266 41h3v1h-3zM272 41h3v1h-3zM278 41h3v1h-3zM284 41h3v1h-3zM290 41h3v1h-3zM296 41h3v1h-3zM302 41h3v1h-3zM308 41h3v1h-3zM314 41h3v1h-3zM320 41h3v1h-3zM326 41h3v1h-3zM332 41h3v1h-3zM338 41h3v1h-3zM344 41h3v1h-3zM350 41h3v1h-3zM356 41h3v1h-3zM362 41h3v1h-3zM368 41h3v1h-3zM374 41h3v1h-3zM380 41h3v1h-3zM386 41h3v1h-3zM392 41h3v1h-3zM398 41h3v1h-3zM404 41h3v1h-3zM410 41h3v1h-3zM416 41h3v1h-3zM422 41h3v1h-3zM428 41h3v1h-3zM434 41h3v1h-3zM440 41h3v1h-3zM446 41h3v1h-3zM452 41h3v1h-3zM458 41h3v1h-3zM464 41h3v1h-3zM470 41h3v1h-3zM476 41h3v1h-3zM482 41h3v1h-3zM488 41h3v1h-3zM494 41h3v1h-3zM500 41h3v1h-3zM506 41h3v1h-3zM512 41h3v1h-3zM518 41h3v1h-3zM524 41h3v1h-3zM530 41h3v1h-3zM536 41h3v1h-3zM542 41h3v1h-3zM548 41h3v1h-3zM554 41h3v1h-3zM560 41h3v1h-3zM566 41h3v1h-3zM572 41h3v1h-3zM578 41h3v1h-3zM584 41h3v1h-3zM590 41h3v1h-3zM596 41h3v1h-3zM602 41h3v1h-3zM608 41h3v1h-3zM614 41h3v1h-3zM620 41h3v1h-3zM626 41h3v1h-3zM632 41h3v1h-3zM638 41h3v1h-3zM644 41h3v1h-3zM650 41h3v1h-3zM656 41h3v1h-3zM662 41h3v1h-3zM668 41h3v1h-3zM674 41h3v1h-3zM14 74h3v1h-3zM20 74h3v1h-3zM26 74h3v1h-3zM32 74h3v1h-3zM38 74h3v1h-3zM44 74h3v1h-3zM50 74h3v1h-3zM56 74h3v1h-3zM62 74h3v1h-3zM68 74h3v1h-3zM74 74h3v1h-3zM80 74h3v1h-3zM86 74h3v1h-3zM92 74h3v1h-3zM98 74h3v1h-3zM104 74h3v1h-3zM110 74h3v1h-3zM116 74h3v1h-3zM122 74h3v1h-3zM128 74h3v1h-3zM134 74h3v1h-3zM140 74h3v1h-3zM146 74h3v1h-3zM152 74h3v1h-3zM158 74h3v1h-3zM164 74h3v1h-3zM170 74h3v1h-3zM176 74h3v1h-3zM182 74h3v1h-3zM188 74h3v1h-3zM194 74h3v1h-3zM200 74h3v1h-3zM206 74h3v1h-3zM212 74h3v1h-3zM218 74h3v1h-3zM224 74h3v1h-3zM230 74h3v1h-3zM236 74h3v1h-3zM242 74h3v1h-3zM248 74h3v1h-3zM254 74h3v1h-3zM260 74h3v1h-3zM266 74h3v1h-3zM272 74h3v1h-3zM278 74h3v1h-3zM284 74h3v1h-3zM290 74h3v1h-3zM296 74h3v1h-3zM302 74h3v1h-3zM308 74h3v1h-3zM314 74h3v1h-3zM320 74h3v1h-3zM326 74h3v1h-3zM332 74h3v1h-3zM338 74h3v1h-3zM344 74h3v1h-3zM350 74h3v1h-3zM356 74h3v1h-3zM362 74h3v1h-3zM368 74h3v1h-3zM374 74h3v1h-3zM380 74h3v1h-3zM386 74h3v1h-3zM392 74h3v1h-3zM398 74h3v1h-3zM404 74h3v1h-3zM410 74h3v1h-3zM416 74h3v1h-3zM422 74h3v1h-3zM428 74h3v1h-3zM434 74h3v1h-3zM440 74h3v1h-3zM446 74h3v1h-3zM452 74h3v1h-3zM458 74h3v1h-3zM464 74h3v1h-3zM470 74h3v1h-3zM476 74h3v1h-3zM482 74h3v1h-3zM488 74h3v1h-3zM494 74h3v1h-3zM500 74h3v1h-3zM506 74h3v1h-3zM512 74h3v1h-3zM518 74h3v1h-3zM524 74h3v1h-3zM530 74h3v1h-3zM536 74h3v1h-3zM542 74h3v1h-3zM548 74h3v1h-3zM554 74h3v1h-3zM560 74h3v1h-3zM566 74h3v1h-3zM572 74h3v1h-3zM578 74h3v1h-3zM584 74h3v1h-3zM590 74h3v1h-3zM596 74h3v1h-3zM602 74h3v1h-3zM608 74h3v1h-3zM614 74h3v1h-3zM620 74h3v1h-3zM626 74h3v1h-3zM632 74h3v1h-3zM638 74h3v1h-3zM644 74h3v1h-3zM650 74h3v1h-3zM656 74h3v1h-3zM662 74h3v1h-3zM668 74h3v1h-3zM674 74h3v1h-3zM14 108h3v1h-3zM20 108h3v1h-3zM26 108h3v1h-3zM32 108h3v1h-3zM38 108h3v1h-3zM44 108h3v1h-3zM50 108h3v1h-3zM56 108h3v1h-3zM62 108h3v1h-3zM68 108h3v1h-3zM74 108h3v1h-3zM80 108h3v1h-3zM86 108h3v1h-3zM92 108h3v1h-3zM98 108h3v1h-3zM104 108h3v1h-3zM110 108h3v1h-3zM116 108h3v1h-3zM122 108h3v1h-3zM128 108h3v1h-3zM134 108h3v1h-3zM140 108h3v1h-3zM146 108h3v1h-3zM152 108h3v1h-3zM158 108h3v1h-3zM164 108h3v1h-3zM170 108h3v1h-3zM176 108h3v1h-3zM182 108h3v1h-3zM188 108h3v1h-3zM194 108h3v1h-3zM200 108h3v1h-3zM206 108h3v1h-3zM212 108h3v1h-3zM218 108h3v1h-3zM224 108h3v1h-3zM230 108h3v1h-3zM236 108h3v1h-3zM242 108h3v1h-3zM248 108h3v1h-3zM254 108h3v1h-3zM260 108h3v1h-3zM266 108h3v1h-3zM272 108h3v1h-3zM278 108h3v1h-3zM284 108h3v1h-3zM290 108h3v1h-3zM296 108h3v1h-3zM302 108h3v1h-3zM308 108h3v1h-3zM314 108h3v1h-3zM320 108h3v1h-3zM326 108h3v1h-3zM332 108h3v1h-3zM338 108h3v1h-3zM344 108h3v1h-3zM350 108h3v1h-3zM356 108h3v1h-3zM362 108h3v1h-3zM368 108h3v1h-3zM374 108h3v1h-3zM380 108h3v1h-3zM386 108h3v1h-3zM392 108h3v1h-3zM398 108h3v1h-3zM404 108h3v1h-3zM410 108h3v1h-3zM416 108h3v1h-3zM422 108h3v1h-3zM428 108h3v1h-3zM434 108h3v1h-3zM440 108h3v1h-3zM446 108h3v1h-3zM452 108h3v1h-3zM458 108h3v1h-3zM464 108h3v1h-3zM470 108h3v1h-3zM476 108h3v1h-3zM482 108h3v1h-3zM488 108h3v1h-3zM494 108h3v1h-3zM500 108h3v1h-3zM506 108h3v1h-3zM512 108h3v1h-3zM518 108h3v1h-3zM524 108h3v1h-3zM530 108h3v1h-3zM536 108h3v1h-3zM542 108h3v1h-3zM548 108h3v1h-3zM554 108h3v1h-3zM560 108h3v1h-3zM566 108h3v1h-3zM572 108h3v1h-3zM578 108h3v1h-3zM584 108h3v1h-3zM590 108h3v1h-3zM596 108h3v1h-3zM602 108h3v1h-3zM608 108h3v1h-3zM614 108h3v1h-3zM620 108h3v1h-3zM626 108h3v1h-3zM632 108h3v1h-3zM638 108h3v1h-3zM644 108h3v1h-3zM650 108h3v1h-3zM656 108h3v1h-3zM662 108h3v1h-3zM668 108h3v1h-3zM674 108h3v1h-3zM14 141h3v1h-3zM20 141h3v1h-3zM26 141h3v1h-3zM32 141h3v1h-3zM38 141h3v1h-3zM44 141h3v1h-3zM50 141h3v1h-3zM56 141h3v1h-3zM62 141h3v1h-3zM68 141h3v1h-3zM74 141h3v1h-3zM80 141h3v1h-3zM86 141h3v1h-3zM92 141h3v1h-3zM98 141h3v1h-3zM104 141h3v1h-3zM110 141h3v1h-3zM116 141h3v1h-3zM122 141h3v1h-3zM128 141h3v1h-3zM134 141h3v1h-3zM140 141h3v1h-3zM146 141h3v1h-3zM152 141h3v1h-3zM158 141h3v1h-3zM164 141h3v1h-3zM170 141h3v1h-3zM176 141h3v1h-3zM182 141h3v1h-3zM188 141h3v1h-3zM194 141h3v1h-3zM200 141h3v1h-3zM206 141h3v1h-3zM212 141h3v1h-3zM218 141h3v1h-3zM224 141h3v1h-3zM230 141h3v1h-3zM236 141h3v1h-3zM242 141h3v1h-3zM248 141h3v1h-3zM254 141h3v1h-3zM260 141h3v1h-3zM266 141h3v1h-3zM272 141h3v1h-3zM278 141h3v1h-3zM284 141h3v1h-3zM290 141h3v1h-3zM296 141h3v1h-3zM302 141h3v1h-3zM308 141h3v1h-3zM314 141h3v1h-3zM320 141h3v1h-3zM326 141h3v1h-3zM332 141h3v1h-3zM338 141h3v1h-3zM344 141h3v1h-3zM350 141h3v1h-3zM356 141h3v1h-3zM362 141h3v1h-3zM368 141h3v1h-3zM374 141h3v1h-3zM380 141h3v1h-3zM386 141h3v1h-3zM392 141h3v1h-3zM398 141h3v1h-3zM404 141h3v1h-3zM410 141h3v1h-3zM416 141h3v1h-3zM422 141h3v1h-3zM428 141h3v1h-3zM434 141h3v1h-3zM440 141h3v1h-3zM446 141h3v1h-3zM452 141h3v1h-3zM458 141h3v1h-3zM464 141h3v1h-3zM470 141h3v1h-3zM476 141h3v1h-3zM482 141h3v1h-3zM488 141h3v1h-3zM494 141h3v1h-3zM500 141h3v1h-3zM506 141h3v1h-3zM512 141h3v1h-3zM518 141h3v1h-3zM524 141h3v1h-3zM530 141h3v1h-3zM536 141h3v1h-3zM542 141h3v1h-3zM548 141h3v1h-3zM554 141h3v1h-3zM560 141h3v1h-3zM566 141h3v1h-3zM572 141h3v1h-3zM578 141h3v1h-3zM584 141h3v1h-3zM590 141h3v1h-3zM596 141h3v1h-3zM602 141h3v1h-3zM608 141h3v1h-3zM614 141h3v1h-3zM620 141h3v1h-3zM626 141h3v1h-3zM632 141h3v1h-3zM638 141h3v1h-3zM644 141h3v1h-3zM650 141h3v1h-3zM656 141h3v1h-3zM662 141h3v1h-3zM668 141h3v1h-3zM674 141h3v1h-3zM14 174h3v1h-3zM20 174h3v1h-3zM26 174h3v1h-3zM32 174h3v1h-3zM38 174h3v1h-3zM44 174h3v1h-3zM50 174h3v1h-3zM56 174h3v1h-3zM62 174h3v1h-3zM68 174h3v1h-3zM74 174h3v1h-3zM80 174h3v1h-3zM86 174h3v1h-3zM92 174h3v1h-3zM98 174h3v1h-3zM104 174h3v1h-3zM110 174h3v1h-3zM116 174h3v1h-3zM122 174h3v1h-3zM128 174h3v1h-3zM134 174h3v1h-3zM140 174h3v1h-3zM146 174h3v1h-3zM152 174h3v1h-3zM158 174h3v1h-3zM164 174h3v1h-3zM170 174h3v1h-3zM176 174h3v1h-3zM182 174h3v1h-3zM188 174h3v1h-3zM194 174h3v1h-3zM200 174h3v1h-3zM206 174h3v1h-3zM212 174h3v1h-3zM218 174h3v1h-3zM224 174h3v1h-3zM230 174h3v1h-3zM236 174h3v1h-3zM242 174h3v1h-3zM248 174h3v1h-3zM254 174h3v1h-3zM260 174h3v1h-3zM266 174h3v1h-3zM272 174h3v1h-3zM278 174h3v1h-3zM284 174h3v1h-3zM290 174h3v1h-3zM296 174h3v1h-3zM302 174h3v1h-3zM308 174h3v1h-3zM314 174h3v1h-3zM320 174h3v1h-3zM326 174h3v1h-3zM332 174h3v1h-3zM338 174h3v1h-3zM344 174h3v1h-3zM350 174h3v1h-3zM356 174h3v1h-3zM362 174h3v1h-3zM368 174h3v1h-3zM374 174h3v1h-3zM380 174h3v1h-3zM386 174h3v1h-3zM392 174h3v1h-3zM398 174h3v1h-3zM404 174h3v1h-3zM410 174h3v1h-3zM416 174h3v1h-3zM422 174h3v1h-3zM428 174h3v1h-3zM434 174h3v1h-3zM440 174h3v1h-3zM446 174h3v1h-3zM452 174h3v1h-3zM458 174h3v1h-3zM464 174h3v1h-3zM470 174h3v1h-3zM476 174h3v1h-3zM482 174h3v1h-3zM488 174h3v1h-3zM494 174h3v1h-3zM500 174h3v1h-3zM506 174h3v1h-3zM512 174h3v1h-3zM518 174h3v1h-3zM524 174h3v1h-3zM530 174h3v1h-3zM536 174h3v1h-3zM542 174h3v1h-3zM548 174h3v1h-3zM554 174h3v1h-3zM560 174h3v1h-3zM566 174h3v1h-3zM572 174h3v1h-3zM578 174h3v1h-3zM584 174h3v1h-3zM590 174h3v1h-3zM596 174h3v1h-3zM602 174h3v1h-3zM608 174h3v1h-3zM614 174h3v1h-3zM620 174h3v1h-3zM626 174h3v1h-3zM632 174h3v1h-3zM638 174h3v1h-3zM644 174h3v1h-3zM650 174h3v1h-3zM656 174h3v1h-3zM662 174h3v1h-3zM668 174h3v1h-3zM674 174h3v1h-3zM14 207h3v1h-3zM20 207h3v1h-3zM26 207h3v1h-3zM32 207h3v1h-3zM38 207h3v1h-3zM44 207h3v1h-3zM50 207h3v1h-3zM56 207h3v1h-3zM62 207h3v1h-3zM68 207h3v1h-3zM74 207h3v1h-3zM80 207h3v1h-3zM86 207h3v1h-3zM92 207h3v1h-3zM98 207h3v1h-3zM104 207h3v1h-3zM110 207h3v1h-3zM116 207h3v1h-3zM122 207h3v1h-3zM128 207h3v1h-3zM134 207h3v1h-3zM140 207h3v1h-3zM146 207h3v1h-3zM152 207h3v1h-3zM158 207h3v1h-3zM164 207h3v1h-3zM170 207h3v1h-3zM176 207h3v1h-3zM182 207h3v1h-3zM188 207h3v1h-3zM194 207h3v1h-3zM200 207h3v1h-3zM206 207h3v1h-3zM212 207h3v1h-3zM218 207h3v1h-3zM224 207h3v1h-3zM230 207h3v1h-3zM236 207h3v1h-3zM242 207h3v1h-3zM248 207h3v1h-3zM254 207h3v1h-3zM260 207h3v1h-3zM266 207h3v1h-3zM272 207h3v1h-3zM278 207h3v1h-3zM284 207h3v1h-3zM290 207h3v1h-3zM296 207h3v1h-3zM302 207h3v1h-3zM308 207h3v1h-3zM314 207h3v1h-3zM320 207h3v1h-3zM326 207h3v1h-3zM332 207h3v1h-3zM338 207h3v1h-3zM344 207h3v1h-3zM350 207h3v1h-3zM356 207h3v1h-3zM362 207h3v1h-3zM368 207h3v1h-3zM374 207h3v1h-3zM380 207h3v1h-3zM386 207h3v1h-3zM392 207h3v1h-3zM398 207h3v1h-3zM404 207h3v1h-3zM410 207h3v1h-3zM416 207h3v1h-3zM422 207h3v1h-3zM428 207h3v1h-3zM434 207h3v1h-3zM440 207h3v1h-3zM446 207h3v1h-3zM452 207h3v1h-3zM458 207h3v1h-3zM464 207h3v1h-3zM470 207h3v1h-3zM476 207h3v1h-3zM482 207h3v1h-3zM488 207h3v1h-3zM494 207h3v1h-3zM500 207h3v1h-3zM506 207h3v1h-3zM512 207h3v1h-3zM518 207h3v1h-3zM524 207h3v1h-3zM530 207h3v1h-3zM536 207h3v1h-3zM542 207h3v1h-3zM548 207h3v1h-3zM554 207h3v1h-3zM560 207h3v1h-3zM566 207h3v1h-3zM572 207h3v1h-3zM578 207h3v1h-3zM584 207h3v1h-3zM590 207h3v1h-3zM596 207h3v1h-3zM602 207h3v1h-3zM608 207h3v1h-3zM614 207h3v1h-3zM620 207h3v1h-3zM626 207h3v1h-3zM632 207h3v1h-3zM638 207h3v1h-3zM644 207h3v1h-3zM650 207h3v1h-3zM656 207h3v1h-3zM662 207h3v1h-3zM668 207h3v1h-3zM674 207h3v1h-3zM14 240h3v1h-3zM20 240h3v1h-3zM26 240h3v1h-3zM32 240h3v1h-3zM38 240h3v1h-3zM44 240h3v1h-3zM50 240h3v1h-3zM56 240h3v1h-3zM62 240h3v1h-3zM68 240h3v1h-3zM74 240h3v1h-3zM80 240h3v1h-3zM86 240h3v1h-3zM92 240h3v1h-3zM98 240h3v1h-3zM104 240h3v1h-3zM110 240h3v1h-3zM116 240h3v1h-3zM122 240h3v1h-3zM128 240h3v1h-3zM134 240h3v1h-3zM140 240h3v1h-3zM146 240h3v1h-3zM152 240h3v1h-3zM158 240h3v1h-3zM164 240h3v1h-3zM170 240h3v1h-3zM176 240h3v1h-3zM182 240h3v1h-3zM188 240h3v1h-3zM194 240h3v1h-3zM200 240h3v1h-3zM206 240h3v1h-3zM212 240h3v1h-3zM218 240h3v1h-3zM224 240h3v1h-3zM230 240h3v1h-3zM236 240h3v1h-3zM242 240h3v1h-3zM248 240h3v1h-3zM254 240h3v1h-3zM260 240h3v1h-3zM266 240h3v1h-3zM272 240h3v1h-3zM278 240h3v1h-3zM284 240h3v1h-3zM290 240h3v1h-3zM296 240h3v1h-3zM302 240h3v1h-3zM308 240h3v1h-3zM314 240h3v1h-3zM320 240h3v1h-3zM326 240h3v1h-3zM332 240h3v1h-3zM338 240h3v1h-3zM344 240h3v1h-3zM350 240h3v1h-3zM356 240h3v1h-3zM362 240h3v1h-3zM368 240h3v1h-3zM374 240h3v1h-3zM380 240h3v1h-3zM386 240h3v1h-3zM392 240h3v1h-3zM398 240h3v1h-3zM404 240h3v1h-3zM410 240h3v1h-3zM416 240h3v1h-3zM422 240h3v1h-3zM428 240h3v1h-3zM434 240h3v1h-3zM440 240h3v1h-3zM446 240h3v1h-3zM452 240h3v1h-3zM458 240h3v1h-3zM464 240h3v1h-3zM470 240h3v1h-3zM476 240h3v1h-3zM482 240h3v1h-3zM488 240h3v1h-3zM494 240h3v1h-3zM500 240h3v1h-3zM506 240h3v1h-3zM512 240h3v1h-3zM518 240h3v1h-3zM524 240h3v1h-3zM530 240h3v1h-3zM536 240h3v1h-3zM542 240h3v1h-3zM548 240h3v1h-3zM554 240h3v1h-3zM560 240h3v1h-3zM566 240h3v1h-3zM572 240h3v1h-3zM578 240h3v1h-3zM584 240h3v1h-3zM590 240h3v1h-3zM596 240h3v1h-3zM602 240h3v1h-3zM608 240h3v1h-3zM614 240h3v1h-3zM620 240h3v1h-3zM626 240h3v1h-3zM632 240h3v1h-3zM638 240h3v1h-3zM644 240h3v1h-3zM650 240h3v1h-3zM656 240h3v1h-3zM662 240h3v1h-3zM668 240h3v1h-3zM674 240h3v1h-3zM14 273h3v1h-3zM20 273h3v1h-3zM26 273h3v1h-3zM32 273h3v1h-3zM38 273h3v1h-3zM44 273h3v1h-3zM50 273h3v1h-3zM56 273h3v1h-3zM62 273h3v1h-3zM68 273h3v1h-3zM74 273h3v1h-3zM80 273h3v1h-3zM86 273h3v1h-3zM92 273h3v1h-3zM98 273h3v1h-3zM104 273h3v1h-3zM110 273h3v1h-3zM116 273h3v1h-3zM122 273h3v1h-3zM128 273h3v1h-3zM134 273h3v1h-3zM140 273h3v1h-3zM146 273h3v1h-3zM152 273h3v1h-3zM158 273h3v1h-3zM164 273h3v1h-3zM170 273h3v1h-3zM176 273h3v1h-3zM182 273h3v1h-3zM188 273h3v1h-3zM194 273h3v1h-3zM200 273h3v1h-3zM206 273h3v1h-3zM212 273h3v1h-3zM218 273h3v1h-3zM224 273h3v1h-3zM230 273h3v1h-3zM236 273h3v1h-3zM242 273h3v1h-3zM248 273h3v1h-3zM254 273h3v1h-3zM260 273h3v1h-3zM266 273h3v1h-3zM272 273h3v1h-3zM278 273h3v1h-3zM284 273h3v1h-3zM290 273h3v1h-3zM296 273h3v1h-3zM302 273h3v1h-3zM308 273h3v1h-3zM314 273h3v1h-3zM320 273h3v1h-3zM326 273h3v1h-3zM332 273h3v1h-3zM338 273h3v1h-3zM344 273h3v1h-3zM350 273h3v1h-3zM356 273h3v1h-3zM362 273h3v1h-3zM368 273h3v1h-3zM374 273h3v1h-3zM380 273h3v1h-3zM386 273h3v1h-3zM392 273h3v1h-3zM398 273h3v1h-3zM404 273h3v1h-3zM410 273h3v1h-3zM416 273h3v1h-3zM422 273h3v1h-3zM428 273h3v1h-3zM434 273h3v1h-3zM440 273h3v1h-3zM446 273h3v1h-3zM452 273h3v1h-3zM458 273h3v1h-3zM464 273h3v1h-3zM470 273h3v1h-3zM476 273h3v1h-3zM482 273h3v1h-3zM488 273h3v1h-3zM494 273h3v1h-3zM500 273h3v1h-3zM506 273h3v1h-3zM512 273h3v1h-3zM518 273h3v1h-3zM524 273h3v1h-3zM530 273h3v1h-3zM536 273h3v1h-3zM542 273h3v1h-3zM548 273h3v1h-3zM554 273h3v1h-3zM560 273h3v1h-3zM566 273h3v1h-3zM572 273h3v1h-3zM578 273h3v1h-3zM584 273h3v1h-3zM590 273h3v1h-3zM596 273h3v1h-3zM602 273h3v1h-3zM608 273h3v1h-3zM614 273h3v1h-3zM620 273h3v1h-3zM626 273h3v1h-3zM632 273h3v1h-3zM638 273h3v1h-3zM644 273h3v1h-3zM650 273h3v1h-3zM656 273h3v1h-3zM662 273h3v1h-3zM668 273h3v1h-3zM674 273h3v1h-3zM14 306h3v1h-3zM20 306h3v1h-3zM26 306h3v1h-3zM32 306h3v1h-3zM38 306h3v1h-3zM44 306h3v1h-3zM50 306h3v1h-3zM56 306h3v1h-3zM62 306h3v1h-3zM68 306h3v1h-3zM74 306h3v1h-3zM80 306h3v1h-3zM86 306h3v1h-3zM92 306h3v1h-3zM98 306h3v1h-3zM104 306h3v1h-3zM110 306h3v1h-3zM116 306h3v1h-3zM122 306h3v1h-3zM128 306h3v1h-3zM134 306h3v1h-3zM140 306h3v1h-3zM146 306h3v1h-3zM152 306h3v1h-3zM158 306h3v1h-3zM164 306h3v1h-3zM170 306h3v1h-3zM176 306h3v1h-3zM182 306h3v1h-3zM188 306h3v1h-3zM194 306h3v1h-3zM200 306h3v1h-3zM206 306h3v1h-3zM212 306h3v1h-3zM218 306h3v1h-3zM224 306h3v1h-3zM230 306h3v1h-3zM236 306h3v1h-3zM242 306h3v1h-3zM248 306h3v1h-3zM254 306h3v1h-3zM260 306h3v1h-3zM266 306h3v1h-3zM272 306h3v1h-3zM278 306h3v1h-3zM284 306h3v1h-3zM290 306h3v1h-3zM296 306h3v1h-3zM302 306h3v1h-3zM308 306h3v1h-3zM314 306h3v1h-3zM320 306h3v1h-3zM326 306h3v1h-3zM332 306h3v1h-3zM338 306h3v1h-3zM344 306h3v1h-3zM350 306h3v1h-3zM356 306h3v1h-3zM362 306h3v1h-3zM368 306h3v1h-3zM374 306h3v1h-3zM380 306h3v1h-3zM386 306h3v1h-3zM392 306h3v1h-3zM398 306h3v1h-3zM404 306h3v1h-3zM410 306h3v1h-3zM416 306h3v1h-3zM422 306h3v1h-3zM428 306h3v1h-3zM434 306h3v1h-3zM440 306h3v1h-3zM446 306h3v1h-3zM452 306h3v1h-3zM458 306h3v1h-3zM464 306h3v1h-3zM470 306h3v1h-3zM476 306h3v1h-3zM482 306h3v1h-3zM488 306h3v1h-3zM494 306h3v1h-3zM500 306h3v1h-3zM506 306h3v1h-3zM512 306h3v1h-3zM518 306h3v1h-3zM524 306h3v1h-3zM530 306h3v1h-3zM536 306h3v1h-3zM542 306h3v1h-3zM548 306h3v1h-3zM554 306h3v1h-3zM560 306h3v1h-3zM566 306h3v1h-3zM572 306h3v1h-3zM578 306h3v1h-3zM584 306h3v1h-3zM590 306h3v1h-3zM596 306h3v1h-3zM602 306h3v1h-3zM608 306h3v1h-3zM614 306h3v1h-3zM620 306h3v1h-3zM626 306h3v1h-3zM632 306h3v1h-3zM638 306h3v1h-3zM644 306h3v1h-3zM650 306h3v1h-3zM656 306h3v1h-3zM662 306h3v1h-3zM668 306h3v1h-3zM674 306h3v1h-3zM14 340h3v1h-3zM20 340h3v1h-3zM26 340h3v1h-3zM32 340h3v1h-3zM38 340h3v1h-3zM44 340h3v1h-3zM50 340h3v1h-3zM56 340h3v1h-3zM62 340h3v1h-3zM68 340h3v1h-3zM74 340h3v1h-3zM80 340h3v1h-3zM86 340h3v1h-3zM92 340h3v1h-3zM98 340h3v1h-3zM104 340h3v1h-3zM110 340h3v1h-3zM116 340h3v1h-3zM122 340h3v1h-3zM128 340h3v1h-3zM134 340h3v1h-3zM140 340h3v1h-3zM146 340h3v1h-3zM152 340h3v1h-3zM158 340h3v1h-3zM164 340h3v1h-3zM170 340h3v1h-3zM176 340h3v1h-3zM182 340h3v1h-3zM188 340h3v1h-3zM194 340h3v1h-3zM200 340h3v1h-3zM206 340h3v1h-3zM212 340h3v1h-3zM218 340h3v1h-3zM224 340h3v1h-3zM230 340h3v1h-3zM236 340h3v1h-3zM242 340h3v1h-3zM248 340h3v1h-3zM254 340h3v1h-3zM260 340h3v1h-3zM266 340h3v1h-3zM272 340h3v1h-3zM278 340h3v1h-3zM284 340h3v1h-3zM290 340h3v1h-3zM296 340h3v1h-3zM302 340h3v1h-3zM308 340h3v1h-3zM314 340h3v1h-3zM320 340h3v1h-3zM326 340h3v1h-3zM332 340h3v1h-3zM338 340h3v1h-3zM344 340h3v1h-3zM350 340h3v1h-3zM356 340h3v1h-3zM362 340h3v1h-3zM368 340h3v1h-3zM374 340h3v1h-3zM380 340h3v1h-3zM386 340h3v1h-3zM392 340h3v1h-3zM398 340h3v1h-3zM404 340h3v1h-3zM410 340h3v1h-3zM416 340h3v1h-3zM422 340h3v1h-3zM428 340h3v1h-3zM434 340h3v1h-3zM440 340h3v1h-3zM446 340h3v1h-3zM452 340h3v1h-3zM458 340h3v1h-3zM464 340h3v1h-3zM470 340h3v1h-3zM476 340h3v1h-3zM482 340h3v1h-3zM488 340h3v1h-3zM494 340h3v1h-3zM500 340h3v1h-3zM506 340h3v1h-3zM512 340h3v1h-3zM518 340h3v1h-3zM524 340h3v1h-3zM530 340h3v1h-3zM536 340h3v1h-3zM542 340h3v1h-3zM548 340h3v1h-3zM554 340h3v1h-3zM560 340h3v1h-3zM566 340h3v1h-3zM572 340h3v1h-3zM578 340h3v1h-3zM584 340h3v1h-3zM590 340h3v1h-3zM596 340h3v1h-3zM602 340h3v1h-3zM608 340h3v1h-3zM614 340h3v1h-3zM620 340h3v1h-3zM626 340h3v1h-3zM632 340h3v1h-3zM638 340h3v1h-3zM644 340h3v1h-3zM650 340h3v1h-3zM656 340h3v1h-3zM662 340h3v1h-3zM668 340h3v1h-3zM674 340h3v1h-3zM14 373h3v1h-3zM20 373h3v1h-3zM26 373h3v1h-3zM32 373h3v1h-3zM38 373h3v1h-3zM44 373h3v1h-3zM50 373h3v1h-3zM56 373h3v1h-3zM62 373h3v1h-3zM68 373h3v1h-3zM74 373h3v1h-3zM80 373h3v1h-3zM86 373h3v1h-3zM92 373h3v1h-3zM98 373h3v1h-3zM104 373h3v1h-3zM110 373h3v1h-3zM116 373h3v1h-3zM122 373h3v1h-3zM128 373h3v1h-3zM134 373h3v1h-3zM140 373h3v1h-3zM146 373h3v1h-3zM152 373h3v1h-3zM158 373h3v1h-3zM164 373h3v1h-3zM170 373h3v1h-3zM176 373h3v1h-3zM182 373h3v1h-3zM188 373h3v1h-3zM194 373h3v1h-3zM200 373h3v1h-3zM206 373h3v1h-3zM212 373h3v1h-3zM218 373h3v1h-3zM224 373h3v1h-3zM230 373h3v1h-3zM236 373h3v1h-3zM242 373h3v1h-3zM248 373h3v1h-3zM254 373h3v1h-3zM260 373h3v1h-3zM266 373h3v1h-3zM272 373h3v1h-3zM278 373h3v1h-3zM284 373h3v1h-3zM290 373h3v1h-3zM296 373h3v1h-3zM302 373h3v1h-3zM308 373h3v1h-3zM314 373h3v1h-3zM320 373h3v1h-3zM326 373h3v1h-3zM332 373h3v1h-3zM338 373h3v1h-3zM344 373h3v1h-3zM350 373h3v1h-3zM356 373h3v1h-3zM362 373h3v1h-3zM368 373h3v1h-3zM374 373h3v1h-3zM380 373h3v1h-3zM386 373h3v1h-3zM392 373h3v1h-3zM398 373h3v1h-3zM404 373h3v1h-3zM410 373h3v1h-3zM416 373h3v1h-3zM422 373h3v1h-3zM428 373h3v1h-3zM434 373h3v1h-3zM440 373h3v1h-3zM446 373h3v1h-3zM452 373h3v1h-3zM458 373h3v1h-3zM464 373h3v1h-3zM470 373h3v1h-3zM476 373h3v1h-3zM482 373h3v1h-3zM488 373h3v1h-3zM494 373h3v1h-3zM500 373h3v1h-3zM506 373h3v1h-3zM512 373h3v1h-3zM518 373h3v1h-3zM524 373h3v1h-3zM530 373h3v1h-3zM536 373h3v1h-3zM542 373h3v1h-3zM548 373h3v1h-3zM554 373h3v1h-3zM560 373h3v1h-3zM566 373h3v1h-3zM572 373h3v1h-3zM578 373h3v1h-3zM584 373h3v1h-3zM590 373h3v1h-3zM596 373h3v1h-3zM602 373h3v1h-3zM608 373h3v1h-3zM614 373h3v1h-3zM620 373h3v1h-3zM626 373h3v1h-3zM632 373h3v1h-3zM638 373h3v1h-3zM644 373h3v1h-3zM650 373h3v1h-3zM656 373h3v1h-3zM662 373h3v1h-3zM668 373h3v1h-3zM674 373h3v1h-3zM14 475h3v1h-3zM20 475h3v1h-3zM26 475h3v1h-3zM32 475h3v1h-3zM38 475h3v1h-3zM44 475h3v1h-3zM50 475h3v1h-3zM56 475h3v1h-3zM62 475h3v1h-3zM68 475h3v1h-3zM74 475h3v1h-3zM80 475h3v1h-3zM86 475h3v1h-3zM92 475h3v1h-3zM98 475h3v1h-3zM104 475h3v1h-3zM110 475h3v1h-3zM116 475h3v1h-3zM122 475h3v1h-3zM128 475h3v1h-3zM134 475h3v1h-3zM140 475h3v1h-3zM146 475h3v1h-3zM152 475h3v1h-3zM158 475h3v1h-3zM164 475h3v1h-3zM170 475h3v1h-3zM176 475h3v1h-3zM182 475h3v1h-3zM188 475h3v1h-3zM194 475h3v1h-3zM200 475h3v1h-3zM206 475h3v1h-3zM212 475h3v1h-3zM218 475h3v1h-3zM224 475h3v1h-3zM230 475h3v1h-3zM236 475h3v1h-3zM242 475h3v1h-3zM248 475h3v1h-3zM254 475h3v1h-3zM260 475h3v1h-3zM266 475h3v1h-3zM272 475h3v1h-3zM278 475h3v1h-3zM284 475h3v1h-3zM290 475h3v1h-3zM296 475h3v1h-3zM302 475h3v1h-3zM308 475h3v1h-3zM314 475h3v1h-3zM320 475h3v1h-3zM326 475h3v1h-3zM332 475h3v1h-3zM338 475h3v1h-3zM344 475h3v1h-3zM350 475h3v1h-3zM356 475h3v1h-3zM362 475h3v1h-3zM368 475h3v1h-3zM374 475h3v1h-3zM380 475h3v1h-3zM386 475h3v1h-3zM392 475h3v1h-3zM398 475h3v1h-3zM404 475h3v1h-3zM410 475h3v1h-3zM416 475h3v1h-3zM422 475h3v1h-3zM428 475h3v1h-3zM434 475h3v1h-3zM440 475h3v1h-3zM446 475h3v1h-3zM452 475h3v1h-3zM458 475h3v1h-3zM464 475h3v1h-3zM470 475h3v1h-3zM476 475h3v1h-3zM482 475h3v1h-3zM488 475h3v1h-3zM494 475h3v1h-3zM500 475h3v1h-3zM506 475h3v1h-3zM512 475h3v1h-3zM518 475h3v1h-3zM524 475h3v1h-3zM530 475h3v1h-3zM536 475h3v1h-3zM542 475h3v1h-3zM548 475h3v1h-3zM554 475h3v1h-3zM560 475h3v1h-3zM566 475h3v1h-3zM572 475h3v1h-3zM578 475h3v1h-3zM584 475h3v1h-3zM590 475h3v1h-3zM596 475h3v1h-3zM602 475h3v1h-3zM608 475h3v1h-3zM614 475h3v1h-3zM620 475h3v1h-3zM626 475h3v1h-3zM632 475h3v1h-3zM638 475h3v1h-3zM644 475h3v1h-3zM650 475h3v1h-3zM656 475h3v1h-3zM662 475h3v1h-3zM668 475h3v1h-3zM674 475h3v1h-3z" fill="#778899"/>
<path d="M581 36h1v2h-1zM581 41h1v3h-1zM581 47h1v3h-1zM581 53h1v3h-1zM581 59h1v3h-1zM581 65h1v3h-1zM581 71h1v3h-1zM581 77h1v3h-1zM581 83h1v3h-1zM581 89h1v3h-1zM581 95h1v3h-1zM581 101h1v3h-1zM581 107h1v3h-1zM581 113h1v3h-1zM581 119h1v3h-1zM581 125h1v3h-1zM581 131h1v3h-1zM581 137h1v3h-1zM581 143h1v3h-1zM581 149h1v3h-1zM581 155h1v3h-1zM581 161h1v3h-1zM581 167h1v3h-1zM581 173h1v3h-1zM581 179h1v3h-1zM581 185h1v3h-1zM581 191h1v3h-1zM581 197h1v3h-1zM581 203h1v3h-1zM581 209h1v3h-1zM581 215h1v3h-1zM581 221h1v3h-1zM581 227h1v3h-1zM581 233h1v3h-1zM581 239h1v3h-1zM581 245h1v3h-1zM581 251h1v3h-1zM581 257h1v3h-1zM581 263h1v3h-1zM581 269h1v3h-1zM581 275h1v3h-1zM581 281h1v3h-1zM581 287h1v3h-1zM581 293h1v3h-1zM581 299h1v3h-1zM581 305h1v3h-1zM581 311h1v3h-1zM581 317h1v3h-1zM581 323h1v3h-1zM581 329h1v3h-1zM581 335h1v3h-1zM581 341h1v3h-1zM581 347h1v3h-1zM581 353h1v3h-1zM581 359h1v3h-1zM581 365h1v3h-1zM581 371h1v3h-1zM581 377h1v1h-1zM581 379h1v1h-1zM581 383h1v3h-1zM581 389h1v3h-1zM581 395h1v3h-1zM581 401h1v3h-1zM581 407h1v3h-1zM581 413h1v3h-1zM581 419h1v3h-1zM581 425h1v3h-1zM581 431h1v3h-1zM581 437h1v3h-1zM581 443h1v3h-1zM581 449h1v3h-1zM581 455h1v3h-1zM581 461h1v3h-1zM581 467h1v3h-1zM581 473h1v3h-1zM581 479h1v3h-1zM581 485h1v3h-1zM581 491h1v3h-1zM581 497h1v3h-1zM581 503h1v3h-1zM581 509h1v3h-1zM581 515h1v3h-1zM581 521h1v3h-1zM581 527h1v3h-1zM581 533h1v3h-1zM581 539h1v3h-1zM581 545h1v3h-1zM581 551h1v2h-1z" fill="#ffffff"/>
<path d="M14 397h3v1h-3zM20 397h3v1h-3zM26 397h3v1h-3zM32 397h3v1h-3zM38 397h3v1h-3zM44 397h3v1h-3zM50 397h3v1h-3zM56 397h3v1h-3zM62 397h3v1h-3zM68 397h3v1h-3zM74 397h3v1h-3zM80 397h3v1h-3zM86 397h3v1h-3zM92 397h3v1h-3zM98 397h3v1h-3zM104 397h3v1h-3zM110 397h3v1h-3zM116 397h3v1h-3zM122 397h3v1h-3zM128 397h3v1h-3zM134 397h3v1h-3zM140 397h3v1h-3zM146 397h3v1h-3zM152 397h3v1h-3zM158 397h3v1h-3zM164 397h3v1h-3zM170 397h3v1h-3zM176 397h3v1h-3zM182 397h3v1h-3zM188 397h3v1h-3zM194 397h3v1h-3zM200 397h3v1h-3zM206 397h3v1h-3zM212 397h3v1h-3zM218 397h3v1h-3zM224 397h3v1h-3zM230 397h3v1h-3zM236 397h3v1h-3zM242 397h3v1h-3zM248 397h3v1h-3zM254 397h3v1h-3zM260 397h3v1h-3zM266 397h3v1h-3zM272 397h3v1h-3zM278 397h3v1h-3zM284 397h3v1h-3zM290 397h3v1h-3zM296 397h3v1h-3zM302 397h3v1h-3zM308 397h3v1h-3zM314 397h3v1h-3zM320 397h3v1h-3zM326 397h3v1h-3zM332 397h3v1h-3zM338 397h3v1h-3zM344 397h3v1h-3zM350 397h3v1h-3zM356 397h3v1h-3zM362 397h3v1h-3zM368 397h3v1h-3zM374 397h3v1h-3zM380 397h3v1h-3zM386 397h3v1h-3zM392 397h3v1h-3zM398 397h3v1h-3zM404 397h3v1h-3zM410 397h3v1h-3zM416 397h3v1h-3zM422 397h3v1h-3zM428 397h3v1h-3zM434 397h3v1h-3zM440 397h3v1h-3zM446 397h3v1h-3zM452 397h3v1h-3zM458 397h3v1h-3zM464 397h3v1h-3zM470 397h3v1h-3zM476 397h3v1h-3zM482 397h3v1h-3zM488 397h3v1h-3zM494 397h3v1h-3zM500 397h3v1h-3zM506 397h3v1h-3zM512 397h3v1h-3zM518 397h3v1h-3zM524 397h3v1h-3zM530 397h3v1h-3zM536 397h3v1h-3zM542 397h3v1h-3zM548 397h3v1h-3zM554 397h3v1h-3zM560 397h3v1h-3zM566 397h3v1h-3zM572 397h3v1h-3zM578 397h3v1h-3zM584 397h3v1h-3zM590 397h3v1h-3zM596 397h3v1h-3zM602 397h3v1h-3zM608 397h3v1h-3zM614 397h3v1h-3zM620 397h3v1h-3zM626 397h3v1h-3zM632 397h3v1h-3zM638 397h3v1h-3zM644 397h3v1h-3zM650 397h3v1h-3zM656 397h3v1h-3zM662 397h3v1h-3zM668 397h3v1h-3zM674 397h3v1h-3zM14 413h3v1h-3zM20 413h3v1h-3zM26 413h3v1h-3zM32 413h3v1h-3zM38 413h3v1h-3zM44 413h3v1h-3zM50 413h3v1h-3zM56 413h3v1h-3zM62 413h3v1h-3zM68 413h3v1h-3zM74 413h3v1h-3zM80 413h3v1h-3zM86 413h3v1h-3zM92 413h3v1h-3zM98 413h3v1h-3zM104 413h3v1h-3zM110 413h3v1h-3zM116 413h3v1h-3zM122 413h3v1h-3zM128 413h3v1h-3zM134 413h3v1h-3zM140 413h3v1h-3zM146 413h3v1h-3zM152 413h3v1h-3zM158 413h3v1h-3zM164 413h3v1h-3zM170 413h3v1h-3zM176 413h3v1h-3zM182 413h3v1h-3zM188 413h3v1h-3zM194 413h3v1h-3zM200 413h3v1h-3zM206 413h3v1h-3zM212 413h3v1h-3zM218 413h3v1h-3zM224 413h3v1h-3zM230 413h3v1h-3zM236 413h3v1h-3zM242 413h3v1h-3zM248 413h3v1h-3zM254 413h3v1h-3zM260 413h3v1h-3zM266 413h3v1h-3zM272 413h3v1h-3zM278 413h3v1h-3zM284 413h3v1h-3zM290 413h3v1h-3zM296 413h3v1h-3zM302 413h3v1h-3zM308 413h3v1h-3zM314 413h3v1h-3zM320 413h3v1h-3zM326 413h3v1h-3zM332 413h3v1h-3zM338 413h3v1h-3zM344 413h3v1h-3zM350 413h3v1h-3zM356 413h3v1h-3zM362 413h3v1h-3zM368 413h3v1h-3zM374 413h3v1h-3zM380 413h3v1h-3zM386 413h3v1h-3zM392 413h3v1h-3zM398 413h3v1h-3zM404 413h3v1h-3zM410 413h3v1h-3zM416 413h3v1h-3zM422 413h3v1h-3zM428 413h3v1h-3zM434 413h3v1h-3zM440 413h3v1h-3zM446 413h3v1h-3zM452 413h3v1h-3zM458 413h3v1h-3zM464 413h3v1h-3zM470 413h3v1h-3zM476 413h3v1h-3zM482 413h3v1h-3zM488 413h3v1h-3zM494 413h3v1h-3zM500 413h3v1h-3zM506 413h3v1h-3zM512 413h3v1h-3zM518 413h3v1h-3zM524 413h3v1h-3zM530 413h3v1h-3zM536 413h3v1h-3zM542 413h3v1h-3zM548 413h3v1h-3zM554 413h3v1h-3zM560 413h3v1h-3zM566 413h3v1h-3zM572 413h3v1h-3zM578 413h3v1h-3zM584 413h3v1h-3zM590 413h3v1h-3zM596 413h3v1h-3zM602 413h3v1h-3zM608 413h3v1h-3zM614 413h3v1h-3zM620 413h3v1h-3zM626 413h3v1h-3zM632 413h3v1h-3zM638 413h3v1h-3zM644 413h3v1h-3zM650 413h3v1h-3zM656 413h3v1h-3zM662 413h3v1h-3zM668 413h3v1h-3zM674 413h3v1h-3zM14 436h3v1h-3zM20 436h3v1h-3zM26 436h3v1h-3zM32 436h3v1h-3zM38 436h3v1h-3zM44 436h3v1h-3zM50 436h3v1h-3zM56 436h3v1h-3zM62 436h3v1h-3zM68 436h3v1h-3zM74 436h3v1h-3zM80 436h3v1h-3zM86 436h3v1h-3zM92 436h3v1h-3zM98 436h3v1h-3zM104 436h3v1h-3zM110 436h3v1h-3zM116 436h3v1h-3zM122 436h3v1h-3zM128 436h3v1h-3zM134 436h3v1h-3zM140 436h3v1h-3zM146 436h3v1h-3zM152 436h3v1h-3zM158 436h3v1h-3zM164 436h3v1h-3zM170 436h3v1h-3zM176 436h3v1h-3zM182 436h3v1h-3zM188 436h3v1h-3zM194 436h3v1h-3zM200 436h3v1h-3zM206 436h3v1h-3zM212 436h3v1h-3zM218 436h3v1h-3zM224 436h3v1h-3zM230 436h3v1h-3zM236 436h3v1h-3zM242 436h3v1h-3zM248 436h3v1h-3zM254 436h3v1h-3zM260 436h3v1h-3zM266 436h3v1h-3zM272 436h3v1h-3zM278 436h3v1h-3zM284 436h3v1h-3zM290 436h3v1h-3zM296 436h3v1h-3zM302 436h3v1h-3zM308 436h3v1h-3zM314 436h3v1h-3zM320 436h3v1h-3zM326 436h3v1h-3zM332 436h3v1h-3zM338 436h3v1h-3zM344 436h3v1h-3zM350 436h3v1h-3zM356 436h3v1h-3zM362 436h3v1h-3zM368 436h3v1h-3zM374 436h3v1h-3zM380 436h3v1h-3zM386 436h3v1h-3zM392 436h3v1h-3zM398 436h3v1h-3zM404 436h3v1h-3zM410 436h3v1h-3zM416 436h3v1h-3zM422 436h3v1h-3zM428 436h3v1h-3zM434 436h3v1h-3zM440 436h3v1h-3zM446 436h3v1h-3zM452 436h3v1h-3zM458 436h3v1h-3zM464 436h3v1h-3zM470 436h3v1h-3zM476 436h3v1h-3zM482 436h3v1h-3zM488 436h3v1h-3zM494 436h3v1h-3zM500 436h3v1h-3zM506 436h3v1h-3zM512 436h3v1h-3zM518 436h3v1h-3zM524 436h3v1h-3zM530 436h3v1h-3zM536 436h3v1h-3zM542 436h3v1h-3zM548 436h3v1h-3zM554 436h3v1h-3zM560 436h3v1h-3zM566 436h3v1h-3zM572 436h3v1h-3zM578 436h3v1h-3zM584 436h3v1h-3zM590 436h3v1h-3zM596 436h3v1h-3zM602 436h3v1h-3zM608 436h3v1h-3zM614 436h3v1h-3zM620 436h3v1h-3zM626 436h3v1h-3zM632 436h3v1h-3zM638 436h3v1h-3zM644 436h3v1h-3zM650 436h3v1h-3zM656 436h3v1h-3zM662 436h3v1h-3zM668 436h3v1h-3zM674 436h3v1h-3zM14 514h3v1h-3zM20 514h3v1h-3zM26 514h3v1h-3zM32 514h3v1h-3zM38 514h3v1h-3zM44 514h3v1h-3zM50 514h3v1h-3zM56 514h3v1h-3zM62 514h3v1h-3zM68 514h3v1h-3zM74 514h3v1h-3zM80 514h3v1h-3zM86 514h3v1h-3zM92 514h3v1h-3zM98 514h3v1h-3zM104 514h3v1h-3zM110 514h3v1h-3zM116 514h3v1h-3zM122 514h3v1h-3zM128 514h3v1h-3zM134 514h3v1h-3zM140 514h3v1h-3zM146 514h3v1h-3zM152 514h3v1h-3zM158 514h3v1h-3zM164 514h3v1h-3zM170 514h3v1h-3zM176 514h3v1h-3zM182 514h3v1h-3zM188 514h3v1h-3zM194 514h3v1h-3zM200 514h3v1h-3zM206 514h3v1h-3zM212 514h3v1h-3zM218 514h3v1h-3zM224 514h3v1h-3zM230 514h3v1h-3zM236 514h3v1h-3zM242 514h3v1h-3zM248 514h3v1h-3zM254 514h3v1h-3zM260 514h3v1h-3zM266 514h3v1h-3zM272 514h3v1h-3zM278 514h3v1h-3zM284 514h3v1h-3zM290 514h3v1h-3zM296 514h3v1h-3zM302 514h3v1h-3zM308 514h3v1h-3zM314 514h3v1h-3zM320 514h3v1h-3zM326 514h3v1h-3zM332 514h3v1h-3zM338 514h3v1h-3zM344 514h3v1h-3zM350 514h3v1h-3zM356 514h3v1h-3zM362 514h3v1h-3zM368 514h3v1h-3zM374 514h3v1h-3zM380 514h3v1h-3zM386 514h3v1h-3zM392 514h3v1h-3zM398 514h3v1h-3zM404 514h3v1h-3zM410 514h3v1h-3zM416 514h3v1h-3zM422 514h3v1h-3zM428 514h3v1h-3zM434 514h3v1h-3zM440 514h3v1h-3zM446 514h3v1h-3zM452 514h3v1h-3zM458 514h3v1h-3zM464 514h3v1h-3zM470 514h3v1h-3zM476 514h3v1h-3zM482 514h3v1h-3zM488 514h3v1h-3zM494 514h3v1h-3zM500 514h3v1h-3zM506 514h3v1h-3zM512 514h3v1h-3zM518 514h3v1h-3zM524 514h3v1h-3zM530 514h3v1h-3zM536 514h3v1h-3zM542 514h3v1h-3zM548 514h3v1h-3zM554 514h3v1h-3zM560 514h3v1h-3zM566 514h3v1h-3zM572 514h3v1h-3zM578 514h3v1h-3zM584 514h3v1h-3zM590 514h3v1h-3zM596 514h3v1h-3zM602 514h3v1h-3zM608 514h3v1h-3zM614 514h3v1h-3zM620 514h3v1h-3zM626 514h3v1h-3zM632 514h3v1h-3zM638 514h3v1h-3zM644 514h3v1h-3zM650 514h3v1h-3zM656 514h3v1h-3zM662 514h3v1h-3zM668 514h3v1h-3zM674 514h3v1h-3zM14 537h3v1h-3zM20 537h3v1h-3zM26 537h3v1h-3zM32 537h3v1h-3zM38 537h3v1h-3zM44 537h3v1h-3zM50 537h3v1h-3zM56 537h3v1h-3zM62 537h3v1h-3zM68 537h3v1h-3zM74 537h3v1h-3zM80 537h3v1h-3zM86 537h3v1h-3zM92 537h3v1h-3zM98 537h3v1h-3zM104 537h3v1h-3zM110 537h3v1h-3zM116 537h3v1h-3zM122 537h3v1h-3zM128 537h3v1h-3zM134 537h3v1h-3zM140 537h3v1h-3zM146 537h3v1h-3zM152 537h3v1h-3zM158 537h3v1h-3zM164 537h3v1h-3zM170 537h3v1h-3zM176 537h3v1h-3zM182 537h3v1h-3zM188 537h3v1h-3zM194 537h3v1h-3zM200 537h3v1h-3zM206 537h3v1h-3zM212 537h3v1h-3zM218 537h3v1h-3zM224 537h3v1h-3zM230 537h3v1h-3zM236 537h3v1h-3zM242 537h3v1h-3zM248 537h3v1h-3zM254 537h3v1h-3zM260 537h3v1h-3zM266 537h3v1h-3zM272 537h3v1h-3zM278 537h3v1h-3zM284 537h3v1h-3zM290 537h3v1h-3zM296 537h3v1h-3zM302 537h3v1h-3zM308 537h3v1h-3zM314 537h3v1h-3zM320 537h3v1h-3zM326 537h3v1h-3zM332 537h3v1h-3zM338 537h3v1h-3zM344 537h3v1h-3zM350 537h3v1h-3zM356 537h3v1h-3zM362 537h3v1h-3zM368 537h3v1h-3zM374 537h3v1h-3zM380 537h3v1h-3zM386 537h3v1h-3zM392 537h3v1h-3zM398 537h3v1h-3zM404 537h3v1h-3zM410 537h3v1h-3zM416 537h3v1h-3zM422 537h3v1h-3zM428 537h3v1h-3zM434 537h3v1h-3zM440 537h3v1h-3zM446 537h3v1h-3zM452 537h3v1h-3zM458 537h3v1h-3zM464 537h3v1h-3zM470 537h3v1h-3zM476 537h3v1h-3zM482 537h3v1h-3zM488 537h3v1h-3zM494 537h3v1h-3zM500 537h3v1h-3zM506 537h3v1h-3zM512 537h3v1h-3zM518 537h3v1h-3zM524 537h3v1h-3zM530 537h3v1h-3zM536 537h3v1h-3zM542 537h3v1h-3zM548 537h3v1h-3zM554 537h3v1h-3zM560 537h3v1h-3zM566 537h3v1h-3zM572 537h3v1h-3zM578 537h3v1h-3zM584 537h3v1h-3zM590 537h3v1h-3zM596 537h3v1h-3zM602 537h3v1h-3zM608 537h3v1h-3zM614 537h3v1h-3zM620 537h3v1h-3zM626 537h3v1h-3zM632 537h3v1h-3zM638 537h3v1h-3zM644 537h3v1h-3zM650 537h3v1h-3zM656 537h3v1h-3zM662 537h3v1h-3zM668 537h3v1h-3zM674 537h3v1h-3z" fill="#c8c8c8"/>
<path d="M12 35h670v1h-669v342h668v1h-669z" fill="#fff"/>
<rect x="681" y="35" width="1" height="344" fill="#fff"/>
<path d="M12 380h670v1h-669v172h668v1h-669z" fill="#fff"/>
<rect x="681" y="380" width="1" height="174" fill="#fff"/>
<rect x="682" y="41" width="2" height="1" fill="#fff"/>
<rect x="682" y="74" width="2" height="1" fill="#fff"/>
<rect x="682" y="108" width="2" height="1" fill="#fff"/>
<rect x="682" y="141" width="2" height="1" fill="#fff"/>
<rect x="682" y="174" width="2" height="1" fill="#fff"/>
<rect x="682" y="207" width="2" height="1" fill="#fff"/>
<rect x="682" y="240" width="2" height="1" fill="#fff"/>
<rect x="682" y="273" width="2" height="1" fill="#fff"/>
<rect x="682" y="306" width="2" height="1" fill="#fff"/>
<rect x="682" y="340" width="2" height="1" fill="#fff"/>
<rect x="682" y="373" width="2" height="1" fill="#fff"/>
<rect x="682" y="382" width="1" height="1" fill="#fff"/>
<rect x="682" y="475" width="1" height="1" fill="#fff"/>
<rect x="682" y="514" width="1" height="1" fill="#fff"/>
<rect x="682" y="537" width="1" height="1" fill="#fff"/>
<rect x="13" y="554" width="1" height="3" fill="#fff"/>
<rect x="77" y="554" width="1" height="3" fill="#fff"/>
<rect x="141" y="554" width="1" height="3" fill="#fff"/>
<rect x="205" y="554" width="1" height="3" fill="#fff"/>
<rect x="269" y="554" width="1" height="3" fill="#fff"/>
<rect x="333" y="554" width="1" height="3" fill="#fff"/>
<rect x="397" y="554" width="1" height="3" fill="#fff"/>
<rect x="461" y="554" width="1" height="3" fill="#fff"/>
</g>
<path d="M495 36 H504.5 L499.7 41.5 Z" fill="#778899"/>
<rect x="13" y="323" width="668" height="1" fill="#778899" shape-rendering="crispEdges"/>
<g clip-path="url(#mainclip)" shape-rendering="crispEdges">
<rect x="13" y="96" width="1" height="25" fill="#00ff00"/>
<rect x="11.5" y="106.5" width="4" height="5" fill="#000" stroke="#00ff00" stroke-width="1"/>
<rect x="21" y="98" width="1" height="33" fill="#00ff00"/>
<rect x="19.5" y="107.5" width="4" height="5" fill="#fff" stroke="#00ff00" stroke-width="1"/>
<rect x="29" y="102" width="1" height="15" fill="#00ff00"/>
<rect x="27.5" y="106.5" width="4" height="5" fill="#000" stroke="#00ff00" stroke-width="1"/>
<rect x="37" y="100" width="1" height="22" fill="#00ff00"/>
<rect x="35.5" y="105.5" width="4" height="4" fill="#fff" stroke="#00ff00" stroke-width="1"/>
<rect x="45" y="71" width="1" height="42" fill="#00ff00"/>
<rect x="43.5" y="99.5" width="4" height="13" fill="#000" stroke="#00ff00" stroke-width="1"/>
<rect x="53" y="97" width="1" height="30" fill="#00ff00"/>
<rect x="51.5" y="98.5" width="4" height="22" fill="#fff" stroke="#00ff00" stroke-width="1"/>
<rect x="61" y="90" width="1" height="36" fill="#00ff00"/>
<rect x="59.5" y="101.5" width="4" height="22" fill="#000" stroke="#00ff00" stroke-width="1"/>
<rect x="69" y="84" width="1" height="32" fill="#00ff00"/>
<rect x="67.5" y="100.5" width="4" height="2" fill="#fff" stroke="#00ff00" stroke-width="1"/>
<rect x="77" y="95" width="1" height="28" fill="#00ff00"/>
<rect x="75.5" y="100.5" width="4" height="3" fill="#000" stroke="#00ff00" stroke-width="1"/>
<rect x="85" y="91" width="1" height="28" fill="#00ff00"/>
<rect x="83.5" y="94.5" width="4" height="5" fill="#000" stroke="#00ff00" stroke-width="1"/>
<rect x="93" y="73" width="1" height="29" fill="#00ff00"/>
<rect x="91.5" y="80.5" width="4" height="11" fill="#000" stroke="#00ff00" stroke-width="1"/>
<rect x="101" y="77" width="1" height="45" fill="#00ff00"/>
<rect x="99.5" y="82.5" width="4" height="30" fill="#fff" stroke="#00ff00" stroke-width="1"/>
<rect x="109" y="74" width="1" height="48" fill="#00ff00"/>
<rect x="107.5" y="88.5" width="4" height="23" fill="#000" stroke="#00ff00" stroke-width="1"/>
<rect x="117" y="55" width="1" height="36" fill="#00ff00"/>
<rect x="115.5" y="77.5" width="4" height="10" fill="#000" stroke="#00ff00" stroke-width="1"/>
<rect x="125" y="57" width="1" height="50" fill="#00ff00"/>
<rect x="123.5" y="78.5" width="4" height="18" fill="#fff" stroke="#00ff00" stroke-width="1"/>
<rect x="133" y="59" width="1" height="56" fill="#00ff00"/>
<rect x="131.5" y="80.5" width="4" height="17" fill="#000" stroke="#00ff00" stroke-width="1"/>
<rect x="141" y="56" width="1" height="47" fill="#00ff00"/>
<rect x="139.5" y="83.5" width="4" height="16" fill="#fff" stroke="#00ff00" stroke-width="1"/>
<rect x="149" y="88" width="1" height="121" fill="#00ff00"/>
<rect x="147.5" y="100.5" width="4" height="88" fill="#fff" stroke="#00ff00" stroke-width="1"/>
<rect x="157" y="108" width="1" height="84" fill="#00ff00"/>
<rect x="155.5" y="137.5" width="4" height="49" fill="#000" stroke="#00ff00" stroke-width="1"/>
<rect x="165" y="121" width="1" height="76" fill="#00ff00"/>
<rect x="163.5" y="138.5" width="4" height="58" fill="#fff" stroke="#00ff00" stroke-width="1"/>
<rect x="173" y="143" width="1" height="71" fill="#00ff00"/>
<rect x="171.5" y="149.5" width="4" height="49" fill="#000" stroke="#00ff00" stroke-width="1"/>
<rect x="181" y="140" width="1" height="64" fill="#00ff00"/>
<rect x="179.5" y="147.5" width="4" height="51" fill="#fff" stroke="#00ff00" stroke-width="1"/>
<rect x="189" y="181" width="1" height="90" fill="#00ff00"/>
<rect x="187.5" y="198.5" width="4" height="30" fill="#fff" stroke="#00ff00" stroke-width="1"/>
<rect x="197" y="219" width="1" height="41" fill="#00ff00"/>
<rect x="195.5" y="230.5" width="4" height="7" fill="#fff" stroke="#00ff00" stroke-width="1"/>
<rect x="205" y="193" width="1" height="49" fill="#00ff00"/>
<rect x="203.5" y="225.5" width="4" height="14" fill="#000" stroke="#00ff00" stroke-width="1"/>
<rect x="213" y="178" width="1" height="52" fill="#00ff00"/>
<rect x="211.5" y="181.5" width="4" height="45" fill="#000" stroke="#00ff00" stroke-width="1"/>
<rect x="221" y="145" width="1" height="60" fill="#00ff00"/>
<rect x="219.5" y="161.5" width="4" height="22" fill="#000" stroke="#00ff00" stroke-width="1"/>
<rect x="229" y="116" width="1" height="81" fill="#00ff00"/>
<rect x="227.5" y="144.5" width="4" height="18" fill="#000" stroke="#00ff00" stroke-width="1"/>
<rect x="237" y="131" width="1" height="63" fill="#00ff00"/>
<rect x="235.5" y="143.5" width="4" height="29" fill="#fff" stroke="#00ff00" stroke-width="1"/>
<rect x="245" y="140" width="1" height="56" fill="#00ff00"/>
<rect x="243.5" y="170.5" width="4" height="3" fill="#000" stroke="#00ff00" stroke-width="1"/>
<rect x="253" y="160" width="1" height="47" fill="#00ff00"/>
<rect x="251.5" y="171.5" width="4" height="21" fill="#fff" stroke="#00ff00" stroke-width="1"/>
<rect x="261" y="192" width="1" height="50" fill="#00ff00"/>
<rect x="259.5" y="192.5" width="4" height="13" fill="#fff" stroke="#00ff00" stroke-width="1"/>
<rect x="269" y="159" width="1" height="58" fill="#00ff00"/>
<rect x="267.5" y="166.5" width="4" height="37" fill="#000" stroke="#00ff00" stroke-width="1"/>
<rect x="277" y="161" width="1" height="99" fill="#00ff00"/>
<rect x="275.5" y="166.5" width="4" height="73" fill="#fff" stroke="#00ff00" stroke-width="1"/>
<rect x="285" y="210" width="1" height="55" fill="#00ff00"/>
<rect x="283.5" y="241.5" width="4" height="17" fill="#fff" stroke="#00ff00" stroke-width="1"/>
<rect x="293" y="210" width="1" height="56" fill="#00ff00"/>
<rect x="291.5" y="218.5" width="4" height="40" fill="#000" stroke="#00ff00" stroke-width="1"/>
<rect x="301" y="215" width="1" height="70" fill="#00ff00"/>
<rect x="299.5" y="219.5" width="4" height="31" fill="#fff" stroke="#00ff00" stroke-width="1"/>
<rect x="309" y="212" width="1" height="45" fill="#00ff00"/>
<rect x="307.5" y="220.5" width="4" height="29" fill="#000" stroke="#00ff00" stroke-width="1"/>
<rect x="317" y="198" width="1" height="62" fill="#00ff00"/>
<rect x="315.5" y="222.5" width="4" height="37" fill="#fff" stroke="#00ff00" stroke-width="1"/>
<rect x="325" y="172" width="1" height="102" fill="#00ff00"/>
<rect x="323.5" y="228.5" width="4" height="32" fill="#000" stroke="#00ff00" stroke-width="1"/>
<rect x="333" y="208" width="1" height="156" fill="#00ff00"/>
<rect x="331.5" y="229.5" width="4" height="70" fill="#fff" stroke="#00ff00" stroke-width="1"/>
<rect x="341" y="206" width="1" height="95" fill="#00ff00"/>
<rect x="339.5" y="240.5" width="4" height="58" fill="#000" stroke="#00ff00" stroke-width="1"/>
<rect x="349" y="186" width="1" height="72" fill="#00ff00"/>
<rect x="347.5" y="240.5" width="4" height="14" fill="#fff" stroke="#00ff00" stroke-width="1"/>
<rect x="357" y="225" width="1" height="88" fill="#00ff00"/>
<rect x="355.5" y="253.5" width="4" height="2" fill="#fff" stroke="#00ff00" stroke-width="1"/>
<rect x="365" y="190" width="1" height="106" fill="#00ff00"/>
<rect x="363.5" y="195.5" width="4" height="58" fill="#000" stroke="#00ff00" stroke-width="1"/>
<rect x="373" y="169" width="1" height="170" fill="#00ff00"/>
<rect x="371.5" y="193.5" width="4" height="109" fill="#fff" stroke="#00ff00" stroke-width="1"/>
<rect x="381" y="286" width="1" height="72" fill="#00ff00"/>
<rect x="379.5" y="301.5" width="4" height="14" fill="#fff" stroke="#00ff00" stroke-width="1"/>
<rect x="389" y="252" width="1" height="67" fill="#00ff00"/>
<rect x="387.5" y="270.5" width="4" height="46" fill="#000" stroke="#00ff00" stroke-width="1"/>
<rect x="397" y="259" width="1" height="48" fill="#00ff00"/>
<rect x="395.5" y="271.5" width="4" height="27" fill="#fff" stroke="#00ff00" stroke-width="1"/>
<rect x="405" y="272" width="1" height="35" fill="#00ff00"/>
<rect x="403.5" y="291.5" width="4" height="9" fill="#000" stroke="#00ff00" stroke-width="1"/>
<rect x="413" y="279" width="1" height="47" fill="#00ff00"/>
<rect x="411.5" y="292.5" width="4" height="29" fill="#fff" stroke="#00ff00" stroke-width="1"/>
<rect x="421" y="302" width="1" height="35" fill="#00ff00"/>
<rect x="419.5" y="309.5" width="4" height="11" fill="#000" stroke="#00ff00" stroke-width="1"/>
<rect x="429" y="269" width="1" height="40" fill="#00ff00"/>
<rect x="427.5" y="273.5" width="4" height="35" fill="#000" stroke="#00ff00" stroke-width="1"/>
<rect x="437" y="259" width="1" height="31" fill="#00ff00"/>
<rect x="435.5" y="276.5" width="4" height="12" fill="#fff" stroke="#00ff00" stroke-width="1"/>
<rect x="445" y="252" width="1" height="66" fill="#00ff00"/>
<rect x="443.5" y="288.5" width="4" height="20" fill="#fff" stroke="#00ff00" stroke-width="1"/>
<rect x="453" y="284" width="1" height="36" fill="#00ff00"/>
<rect x="451.5" y="295.5" width="4" height="12" fill="#000" stroke="#00ff00" stroke-width="1"/>
<rect x="461" y="294" width="1" height="70" fill="#00ff00"/>
<rect x="459.5" y="294.5" width="4" height="45" fill="#fff" stroke="#00ff00" stroke-width="1"/>
<rect x="469" y="329" width="1" height="20" fill="#00ff00"/>
<rect x="467.5" y="331.5" width="4" height="5" fill="#000" stroke="#00ff00" stroke-width="1"/>
<rect x="477" y="321" width="1" height="19" fill="#00ff00"/>
<rect x="475.5" y="325.5" width="4" height="6" fill="#000" stroke="#00ff00" stroke-width="1"/>
<rect x="483" y="323" width="5" height="2" fill="#00ff00"/>
</g>
<path d="M234.9 92.9 H240.1 V105.8 L247 99.9 V107.1 L237.5 116.2 L227.9 107.1 V99.9 L234.9 105.8 Z" fill="#ffff00"/>
<polygon points="228.40,84.90 230.28,90.01 235.72,90.22 231.44,93.59 232.93,98.83 228.40,95.80 223.87,98.83 225.36,93.59 221.08,90.22 226.52,90.01" fill="#ffff00"/>
<g clip-path="url(#indclip)">
<polyline points="13,426.3 21,422.4 29,422.4 37,419 45,417 53,414.9 61,413.2 69,412.1 77,411.5 85,411.2 93,412.1 101,414.5 109,415.6 117,416.5 125,418.6 133,419.7 141,421.1 149,425.2 157,429.3 165,432.7 173,436.8 181,442.3 189,447.8 197,452.6 205,458.1 213,463.6 221,469.1 229,474.6 237,480.4 245,486.6 253,494.3 261,503.6 269,510.6 277,519 285,525.2 293,531.4 301,536 309,539.9 317,542.5 325,542.8 333,542.8 341,542.8 349,542.8 357,542.5 365,542.5 373,541.6 381,541.6 389,541.6 397,541.6 405,541.6 413,542.6 421,542.6 429,543 437,543.6 445,544.5 453,544.5 461,544.5 469,545.9 477,545.9 485,545.9" fill="none" stroke="#ffff00" stroke-width="2" stroke-linejoin="round" shape-rendering="crispEdges"/>
<polyline points="13,412.8 21,419 29,423.1 37,430 45,436.8 53,445.8 61,454 69,463.6 77,473.9 85,483.5 93,493.6 101,510.6 109,522.1 117,522.1 125,518.3 133,514.4 141,509 149,509 157,509 165,509 173,509 181,509 189,509 197,509 205,509 213,514.7 221,519.4 229,523.4 237,525 245,526.3 253,527.5 261,528.6 269,529.1 277,529.9 285,531.7 293,529.9 301,529.6 309,529.1 317,529.1 325,526.7 333,526.7 341,525.7 349,525.3 357,527.9 365,518.8 373,522.8 381,523.6 389,526.7 397,530.5 405,536.6 413,540.6 421,540.6 429,538.6 437,537 445,535.7 453,534.3 461,534.7 469,535.7 477,535.7 485,535.7" fill="none" stroke="#00e5ee" stroke-width="2" stroke-linejoin="round" shape-rendering="crispEdges"/>
<polyline points="13,538.8 21,543 29,539.6 37,535.7 45,516.7 53,515.2 61,487 69,443 77,437.5 85,424.5 93,419.7 101,452.6 109,443.7 117,420.4 125,435.5 133,435 141,457 149,501.3 157,517.5 165,526 173,539.9 181,545 189,545.3 197,545.3 205,542.2 213,512.9 221,498.2 229,451.2 237,447.8 245,417 253,428 261,454 269,470.4 277,514 285,536.8 293,533.7 301,530.6 309,528.3 317,531.8 325,515.4 333,515.4 341,490.7 349,492.7 357,515.9 365,471.3 373,491 381,500.5 389,511.6 397,503 405,524.4 413,527.8 421,522.8 429,492.3 437,458.1 445,467.6 453,487.3 461,487.3 469,508 477,514 485,524.8" fill="none" stroke="#ff0000" stroke-width="2" stroke-linejoin="round" shape-rendering="crispEdges"/>
</g>
<path d="M16 41 H23 L19.5 45.5 Z" fill="#fff"/>
<rect x="683" y="318" width="41" height="11" fill="#fff"/>
<text x="29" y="47" font-family="Liberation Sans, sans-serif" font-size="10" fill="#fff" stroke="#fff" stroke-width="0.15" textLength="60" lengthAdjust="spacingAndGlyphs">EURUSD,M15</text>
<text x="94.2" y="47" font-family="Liberation Sans, sans-serif" font-size="10" fill="#fff" stroke="#fff" stroke-width="0.15" textLength="33" lengthAdjust="spacingAndGlyphs">1.21806</text>
<text x="130.3" y="47" font-family="Liberation Sans, sans-serif" font-size="10" fill="#fff" stroke="#fff" stroke-width="0.15" textLength="33" lengthAdjust="spacingAndGlyphs">1.21808</text>
<text x="166.0" y="47" font-family="Liberation Sans, sans-serif" font-size="10" fill="#fff" stroke="#fff" stroke-width="0.15" textLength="33" lengthAdjust="spacingAndGlyphs">1.21806</text>
<text x="202.1" y="47" font-family="Liberation Sans, sans-serif" font-size="10" fill="#fff" stroke="#fff" stroke-width="0.15" textLength="33" lengthAdjust="spacingAndGlyphs">1.21808</text>
<text x="686.5" y="45" font-family="Liberation Sans, sans-serif" font-size="10" fill="#fff" stroke="#fff" stroke-width="0.15" textLength="34.5" lengthAdjust="spacingAndGlyphs">1.22105</text>
<text x="686.5" y="78" font-family="Liberation Sans, sans-serif" font-size="10" fill="#fff" stroke="#fff" stroke-width="0.15" textLength="34.5" lengthAdjust="spacingAndGlyphs">1.22070</text>
<text x="686.5" y="112" font-family="Liberation Sans, sans-serif" font-size="10" fill="#fff" stroke="#fff" stroke-width="0.15" textLength="34.5" lengthAdjust="spacingAndGlyphs">1.22035</text>
<text x="686.5" y="145" font-family="Liberation Sans, sans-serif" font-size="10" fill="#fff" stroke="#fff" stroke-width="0.15" textLength="34.5" lengthAdjust="spacingAndGlyphs">1.22000</text>
<text x="686.5" y="178" font-family="Liberation Sans, sans-serif" font-size="10" fill="#fff" stroke="#fff" stroke-width="0.15" textLength="34.5" lengthAdjust="spacingAndGlyphs">1.21965</text>
<text x="686.5" y="211" font-family="Liberation Sans, sans-serif" font-size="10" fill="#fff" stroke="#fff" stroke-width="0.15" textLength="34.5" lengthAdjust="spacingAndGlyphs">1.21930</text>
<text x="686.5" y="244" font-family="Liberation Sans, sans-serif" font-size="10" fill="#fff" stroke="#fff" stroke-width="0.15" textLength="34.5" lengthAdjust="spacingAndGlyphs">1.21895</text>
<text x="686.5" y="277" font-family="Liberation Sans, sans-serif" font-size="10" fill="#fff" stroke="#fff" stroke-width="0.15" textLength="34.5" lengthAdjust="spacingAndGlyphs">1.21860</text>
<text x="686.5" y="310" font-family="Liberation Sans, sans-serif" font-size="10" fill="#fff" stroke="#fff" stroke-width="0.15" textLength="34.5" lengthAdjust="spacingAndGlyphs">1.21825</text>
<text x="686.5" y="344" font-family="Liberation Sans, sans-serif" font-size="10" fill="#fff" stroke="#fff" stroke-width="0.15" textLength="34.5" lengthAdjust="spacingAndGlyphs">1.21790</text>
<text x="686.5" y="377" font-family="Liberation Sans, sans-serif" font-size="10" fill="#fff" stroke="#fff" stroke-width="0.15" textLength="34.5" lengthAdjust="spacingAndGlyphs">1.21755</text>
<text x="686.5" y="327" font-family="Liberation Sans, sans-serif" font-size="10" fill="#000" stroke="#000" stroke-width="0.15" textLength="34.5" lengthAdjust="spacingAndGlyphs">1.21808</text>
<text x="684.5" y="391" font-family="Liberation Sans, sans-serif" font-size="10" fill="#fff" stroke="#fff" stroke-width="0.15" textLength="15.01" lengthAdjust="spacingAndGlyphs">120</text>
<text x="684.0" y="401" font-family="Liberation Sans, sans-serif" font-size="10" fill="#fff" stroke="#fff" stroke-width="0.15" textLength="15.01" lengthAdjust="spacingAndGlyphs">100</text>
<text x="683.5" y="417" font-family="Liberation Sans, sans-serif" font-size="10" fill="#fff" stroke="#fff" stroke-width="0.15" textLength="10.01" lengthAdjust="spacingAndGlyphs">80</text>
<text x="683.5" y="440" font-family="Liberation Sans, sans-serif" font-size="10" fill="#fff" stroke="#fff" stroke-width="0.15" textLength="10.01" lengthAdjust="spacingAndGlyphs">50</text>
<text x="684.5" y="479" font-family="Liberation Sans, sans-serif" font-size="10" fill="#fff" stroke="#fff" stroke-width="0.15" textLength="17.51" lengthAdjust="spacingAndGlyphs">0.00</text>
<text x="684.5" y="518" font-family="Liberation Sans, sans-serif" font-size="10" fill="#fff" stroke="#fff" stroke-width="0.15" textLength="13.03" lengthAdjust="spacingAndGlyphs">-50</text>
<text x="684.5" y="541" font-family="Liberation Sans, sans-serif" font-size="10" fill="#fff" stroke="#fff" stroke-width="0.15" textLength="13.03" lengthAdjust="spacingAndGlyphs">-80</text>
<text x="685.0" y="550" font-family="Liberation Sans, sans-serif" font-size="10" fill="#fff" stroke="#fff" stroke-width="0.15" textLength="18.04" lengthAdjust="spacingAndGlyphs">-100</text>
<text x="17" y="393" font-family="Liberation Sans, sans-serif" font-size="10" fill="#fff" stroke="#fff" stroke-width="0.15" textLength="43" lengthAdjust="spacingAndGlyphs">R(9,26,52)</text>
<text x="62.7" y="393" font-family="Liberation Sans, sans-serif" font-size="10" fill="#fff" stroke="#fff" stroke-width="0.15" textLength="21" lengthAdjust="spacingAndGlyphs">-65.0</text>
<text x="87" y="393" font-family="Liberation Sans, sans-serif" font-size="10" fill="#fff" stroke="#fff" stroke-width="0.15" textLength="21" lengthAdjust="spacingAndGlyphs">-78.3</text>
<text x="110.9" y="393" font-family="Liberation Sans, sans-serif" font-size="10" fill="#fff" stroke="#fff" stroke-width="0.15" textLength="21" lengthAdjust="spacingAndGlyphs">-91.5</text>
<text x="12.2" y="566" font-family="Liberation Sans, sans-serif" font-size="10" fill="#fff" stroke="#fff" stroke-width="0.15" textLength="52.5" lengthAdjust="spacingAndGlyphs">24&#160;Dec&#160;2020</text>
<text x="76.2" y="566" font-family="Liberation Sans, sans-serif" font-size="10" fill="#fff" stroke="#fff" stroke-width="0.15" textLength="55" lengthAdjust="spacingAndGlyphs">24&#160;Dec&#160;08:15</text>
<text x="140.2" y="566" font-family="Liberation Sans, sans-serif" font-size="10" fill="#fff" stroke="#fff" stroke-width="0.15" textLength="55" lengthAdjust="spacingAndGlyphs">24&#160;Dec&#160;10:15</text>
<text x="204.2" y="566" font-family="Liberation Sans, sans-serif" font-size="10" fill="#fff" stroke="#fff" stroke-width="0.15" textLength="55" lengthAdjust="spacingAndGlyphs">24&#160;Dec&#160;12:15</text>
<text x="268.2" y="566" font-family="Liberation Sans, sans-serif" font-size="10" fill="#fff" stroke="#fff" stroke-width="0.15" textLength="55" lengthAdjust="spacingAndGlyphs">24&#160;Dec&#160;14:15</text>
<text x="332.2" y="566" font-family="Liberation Sans, sans-serif" font-size="10" fill="#fff" stroke="#fff" stroke-width="0.15" textLength="55" lengthAdjust="spacingAndGlyphs">24&#160;Dec&#160;16:15</text>
<text x="396.2" y="566" font-family="Liberation Sans, sans-serif" font-size="10" fill="#fff" stroke="#fff" stroke-width="0.15" textLength="55" lengthAdjust="spacingAndGlyphs">24&#160;Dec&#160;18:15</text>
<text x="460.2" y="566" font-family="Liberation Sans, sans-serif" font-size="10" fill="#fff" stroke="#fff" stroke-width="0.15" textLength="55" lengthAdjust="spacingAndGlyphs">24&#160;Dec&#160;20:15</text>
</svg></body></html>
